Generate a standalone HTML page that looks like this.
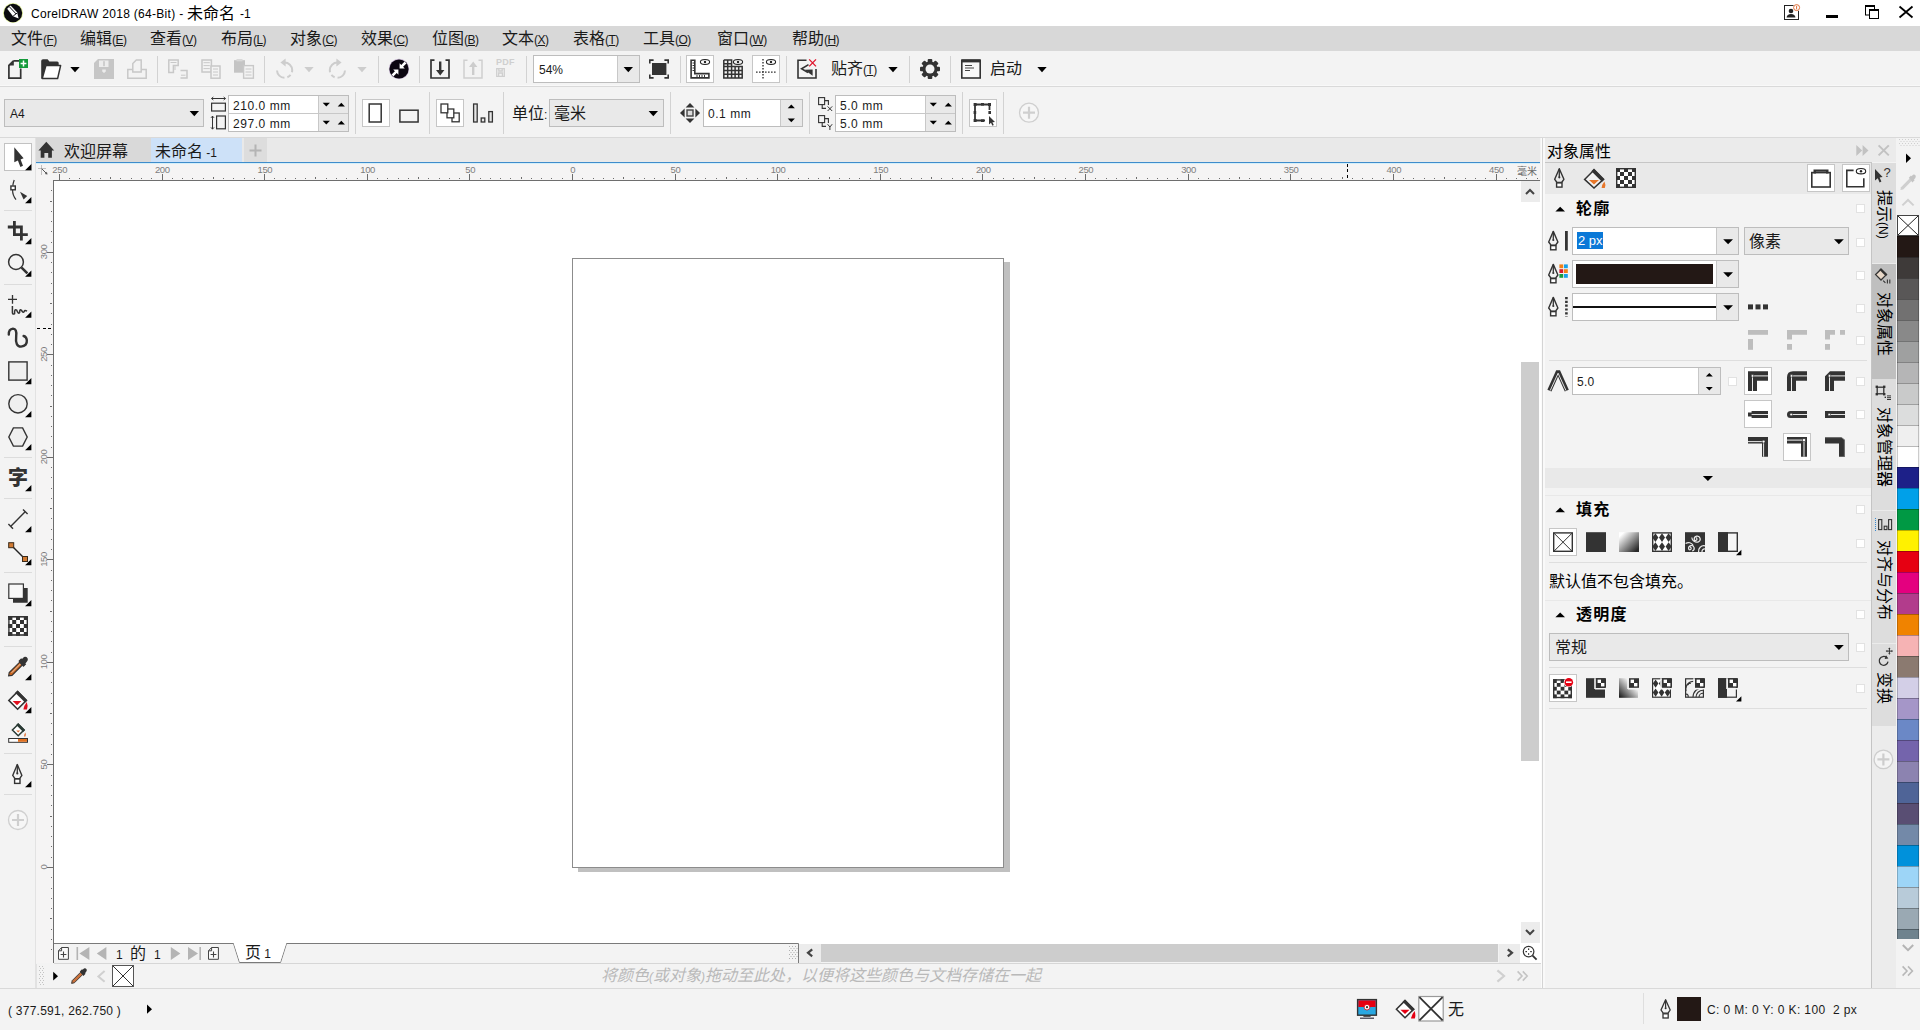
<!DOCTYPE html>
<html lang="zh-CN">
<head>
<meta charset="utf-8">
<title>CorelDRAW 2018 (64-Bit) - 未命名 -1</title>
<style>
*{box-sizing:border-box;margin:0;padding:0}
html,body{width:1920px;height:1030px;overflow:hidden;background:#f3f3f3}
body{position:relative;font-family:"Liberation Sans","Noto Sans CJK SC",sans-serif;font-size:12px;color:#1a1a1a}
.a{position:absolute}
.t{position:absolute;white-space:nowrap;line-height:1}
svg{position:absolute;overflow:visible}
.cj{font-size:16px}
.vs{position:absolute;width:1px;background:#dcdcdc}
.hs{position:absolute;height:1px;background:#dcdcdc}
.btn{position:absolute;background:#fff;border:1px solid #c6c6c6}
.cb{position:absolute;background:#e9e9e9;border:1px solid #bdbdbd}
.ed{position:absolute;background:#fff;border:1px solid #bdbdbd}
.sp{position:absolute;background:#e9e9e9}
.mi{position:absolute;top:26px;height:25px;white-space:nowrap;line-height:25px}
.mi b{font-weight:normal;font-size:16px}
.mi i{font-style:normal;font-size:12px;letter-spacing:-.55px}
.mi u{text-decoration:underline;text-underline-offset:1px}
.sv{font-size:12px;letter-spacing:.55px}
.chk{position:absolute;width:9px;height:9px;background:#fff;border:1px solid #e2e2e2}
</style>
</head>
<body>
<!-- title bar -->
<div class="a" style="left:0;top:0;width:1920px;height:26px;background:#fff"></div>
<svg style="left:2px;top:2px" width="22" height="22" viewBox="0 0 22 22">
 <circle cx="11" cy="11" r="10" fill="#c5e04a" opacity=".55"/>
 <circle cx="11" cy="11" r="9.2" fill="#0b0b10"/>
 <path d="M5.2 6.8 L8.6 3.6 L15.2 10.6 L16.6 16.4 L11 14.2 Z" fill="#fff"/>
 <path d="M7.4 4.8 L14.2 12" stroke="#0b0b10" stroke-width="1" fill="none"/>
 <path d="M11.2 14 L15.4 10.8" stroke="#0b0b10" stroke-width="1" fill="none"/>
</svg>
<div class="t" id="ttl" style="left:31px;top:8px;font-size:12px;color:#000;letter-spacing:.3px">CorelDRAW 2018 (64-Bit) -</div>
<div class="t" id="ttl2" style="left:187px;top:6px;font-size:16px;color:#000">未命名</div>
<div class="t" id="ttl3" style="left:240px;top:8px;font-size:12px;color:#000">-1</div>
<!-- window buttons -->
<svg style="left:1780px;top:0" width="140" height="26" viewBox="1780 0 140 26">
 <rect x="1784.5" y="5.5" width="14" height="14" fill="#fff" stroke="#222" stroke-width="1"/>
 <circle cx="1791" cy="11" r="2.3" fill="#222"/>
 <path d="M1786.5 17.5 q0.5 -3.6 4.5 -3.6 q4 0 4.5 3.6 z" fill="#222"/>
 <circle cx="1796.6" cy="7.6" r="3.6" fill="#fff"/>
 <circle cx="1796.6" cy="7.6" r="3" fill="#fff" stroke="#e0703a" stroke-width="1"/>
 <rect x="1796.1" y="5.8" width="1" height="3.6" fill="#e0703a"/>
 <rect x="1826" y="15" width="12" height="3" fill="#000"/>
 <rect x="1865.5" y="6" width="9" height="9" fill="#fff" stroke="#000" stroke-width="1"/>
 <rect x="1865" y="5" width="10" height="2" fill="#000"/>
 <rect x="1869.5" y="10" width="9" height="8.5" fill="#fff" stroke="#000" stroke-width="1"/>
 <rect x="1869" y="9" width="10" height="2" fill="#000"/>
 <path d="M1899.5 6.5 L1912.5 17.5 M1912.5 6.5 L1899.5 17.5" stroke="#000" stroke-width="1.8" fill="none"/>
</svg>
<!-- menu bar -->
<div class="a" style="left:0;top:26px;width:1920px;height:25px;background:#d8d8d8"></div>
<div class="mi" style="left:11px"><b>文件</b><i>(<u>F</u>)</i></div>
<div class="mi" style="left:80px"><b>编辑</b><i>(<u>E</u>)</i></div>
<div class="mi" style="left:150px"><b>查看</b><i>(<u>V</u>)</i></div>
<div class="mi" style="left:221px"><b>布局</b><i>(<u>L</u>)</i></div>
<div class="mi" style="left:290px"><b>对象</b><i>(<u>C</u>)</i></div>
<div class="mi" style="left:361px"><b>效果</b><i>(<u>C</u>)</i></div>
<div class="mi" style="left:432px"><b>位图</b><i>(<u>B</u>)</i></div>
<div class="mi" style="left:502px"><b>文本</b><i>(<u>X</u>)</i></div>
<div class="mi" style="left:573px"><b>表格</b><i>(<u>T</u>)</i></div>
<div class="mi" style="left:643px"><b>工具</b><i>(<u>O</u>)</i></div>
<div class="mi" style="left:717px"><b>窗口</b><i>(<u>W</u>)</i></div>
<div class="mi" style="left:792px"><b>帮助</b><i>(<u>H</u>)</i></div>
<!-- standard toolbar -->
<div class="hs" style="left:0;top:86px;width:1920px;background:#d9d9d9"></div>
<div class="hs" style="left:0;top:85px;width:1920px;background:#f8f8f8"></div>
<div class="btn" style="left:686px;top:55px;width:28px;height:28px"></div>
<div class="btn" style="left:752px;top:55px;width:28px;height:28px"></div>
<svg style="left:0;top:51px" width="1100" height="36" viewBox="0 51 1100 36">
 <g fill="#d2d2d2">
  <rect x="157" y="56" width="1" height="27"/><rect x="264" y="56" width="1" height="27"/><rect x="378" y="56" width="1" height="27"/>
  <rect x="419" y="56" width="1" height="27"/><rect x="526" y="56" width="1" height="27"/><rect x="680" y="56" width="1" height="27"/>
  <rect x="786" y="56" width="1" height="27"/><rect x="909" y="56" width="1" height="27"/><rect x="950" y="56" width="1" height="27"/>
 </g>
 <!-- new -->
 <path d="M13.5 60.8 H19 M13.5 60.8 L8.9 65.4 V78.1 H20.7 V68.5" fill="none" stroke="#333" stroke-width="1.7"/>
 <path d="M13.8 60.5 V65.6 H8.8 Z" fill="#333"/>
 <rect x="19" y="59" width="9" height="9" fill="#149a3a"/>
 <path d="M23.5 60.6 V66.4 M20.6 63.5 H26.4" stroke="#fff" stroke-width="1.5"/>
 <!-- open -->
 <path d="M41.2 78.6 V61 Q41.2 59.3 43 59.3 H47.6 L49.4 61.4 H57.2 Q58.7 61.4 58.7 63 V65.4 H45.8 L43 78.6 Z" fill="#333"/>
 <path d="M45.9 65.6 H60.6 L57.6 78.6 H42.2 Z" fill="#fff" stroke="#333" stroke-width="1.5" stroke-linejoin="round"/>
 <path d="M70.3 67 H79.7 L75 72.2 Z" fill="#000"/>
 <!-- save disabled -->
 <g fill="#c6c6c6">
  <path d="M94 63 L98 59 H114 V79 H94 Z"/>
 </g>
 <rect x="99" y="60.5" width="9.5" height="6.5" fill="#ececec"/><rect x="103.2" y="61.2" width="1.6" height="5" fill="#c6c6c6"/>
 <path d="M102.2 69.5 H105.8 V71.6 L104 73 L102.2 71.6 Z" fill="#ececec"/>
 <!-- print disabled -->
 <g fill="none" stroke="#c8c8c8" stroke-width="1.5">
  <path d="M132.8 69.5 H127.8 V78.2 H146.2 V69.5 H141.2"/>
  <path d="M132.8 72 V63.5 L136.3 60 H141.2 V72 Z"/>
  <!-- cut -->
  <path d="M168.8 60 H178.2 V65.5 H173.4 V72.4 H168.8 Z"/>
  <path d="M180.5 70.5 H187 V77.9 H180.5"/>
  <path d="M170.5 62.5 H176.5 M175 66.2 V70 M181 75.2 H185.5" stroke-width="1"/>
  <!-- copy -->
  <rect x="202" y="60" width="9.4" height="12" />
  <rect x="211" y="66" width="9" height="12.2" fill="#f3f3f3"/>
  <path d="M203.5 62.7 H209.8 M203.5 65.6 H209.8 M203.5 68.6 H209.8 M213 69 H218 M213 72 H218 M213 75 H218" stroke-width="1"/>
 </g>
 <!-- paste disabled -->
 <rect x="234" y="60.2" width="11" height="12.5" fill="#c4c4c4"/>
 <rect x="236.5" y="59" width="6" height="2.4" fill="#d8d8d8"/>
 <rect x="243.6" y="65.6" width="9.8" height="12.6" fill="#f3f3f3" stroke="#c8c8c8" stroke-width="1.4"/>
 <path d="M245.5 69 H251.5 M245.5 72 H251.5 M245.5 75 H251.5" stroke="#c8c8c8" stroke-width="1"/>
 <!-- undo / redo disabled -->
 <g fill="none" stroke="#cdcdcd" stroke-width="2">
  <path d="M284.5 62.6 A7.6 7.6 0 1 1 277 70.5" stroke-dasharray="14 3 4 3 20"/>
  <path d="M337.5 62.6 A7.6 7.6 0 1 0 345 70.5" stroke-dasharray="14 3 4 3 20"/>
 </g>
 <g fill="#cdcdcd">
  <path d="M285.6 58.6 V66.6 L280.4 62.6 Z"/><path d="M336.4 58.6 V66.6 L341.6 62.6 Z"/>
  <path d="M304.3 67 H313.7 L309 72.2 Z"/><path d="M357.3 67 H366.7 L362 72.2 Z"/>
 </g>
 <!-- black circle -->
 <circle cx="399" cy="69" r="10.2" fill="#6a3a8a" opacity=".35"/>
 <circle cx="399" cy="69" r="9.6" fill="#0b0610"/>
 <g fill="#fff">
  <path d="M399.6 68.4 V63.2 L401.3 64.9 L404.6 61.6 L406.4 63.4 L403.1 66.7 L404.8 68.4 Z"/>
  <path d="M398.4 69.6 V74.8 L396.7 73.1 L393.4 76.4 L391.6 74.6 L394.9 71.3 L393.2 69.6 Z"/>
 </g>
 <!-- import -->
 <path d="M434.5 60.2 H431 V78 H449 V60.2 H445.5" fill="none" stroke="#333" stroke-width="1.7"/>
 <path d="M439 61.4 H441.4 V70 H444.4 L440.2 75.4 L436 70 H439 Z" fill="#333"/>
 <!-- export disabled -->
 <path d="M467.5 60.2 H464 V78 H482 V60.2 H478.5" fill="none" stroke="#cfcfcf" stroke-width="1.5"/>
 <path d="M472 75 H474.4 V67 H477.4 L473.2 61.6 L469 67 H472 Z" fill="#cdcdcd"/>
 <!-- fullscreen -->
 <rect x="652" y="63" width="14.4" height="12" fill="#333"/>
 <path d="M649.8 63.6 V60.1 H653.6 M664.4 60.1 H668.2 V63.6 M668.2 74.4 V77.9 H664.4 M653.6 77.9 H649.8 V74.4" fill="none" stroke="#333" stroke-width="1.6"/>
 <!-- ruler icon -->
 <path d="M691.1 60.2 H694.8 V73.6 H708.9 V77.9 H691.1 Z" fill="#fff" stroke="#333" stroke-width="1.6"/>
 <path d="M692.5 63 H694.5 M692.5 65.5 H694.5 M692.5 68 H694.5 M692.5 70.5 H694.5 M697 75 V77 M699.5 75 V77 M702 75 V77 M704.5 75 V77" stroke="#333" stroke-width="1"/>
 <ellipse cx="705" cy="62" rx="4.6" ry="2.5" fill="#fff" stroke="#222" stroke-width="1.1"/><circle cx="705" cy="62" r="1.2" fill="#222"/>
 <!-- grid icon -->
 <g fill="none" stroke="#333" stroke-width="1.5">
  <path d="M723.8 60 H731.6 V66.4 M723.8 60 V78.1 H742.2 V66.6 H723.8 M723.8 63.8 H731.6 M723.8 70.4 H742.2 M723.8 74.2 H742.2 M727.7 60 V78.1 M731.6 66 V78.1 M735.1 66.6 V78.1 M738.7 66.6 V78.1"/>
 </g>
 <ellipse cx="738" cy="62" rx="4.6" ry="2.5" fill="#f3f3f3" stroke="#222" stroke-width="1.1"/><circle cx="738" cy="62" r="1.2" fill="#222"/>
 <!-- guidelines icon -->
 <path d="M763 59 V79" stroke="#333" stroke-width="1.4" stroke-dasharray="1.6 1.4"/>
 <path d="M756 72.2 H776.4" stroke="#333" stroke-width="1.2" stroke-dasharray="1.6 1.4"/>
 <ellipse cx="771" cy="62" rx="4.6" ry="2.5" fill="#fff" stroke="#222" stroke-width="1.1"/><circle cx="771" cy="62" r="1.2" fill="#222"/>
 <!-- snap off -->
 <path d="M806.5 60.2 H798 V78 H816 V69" fill="none" stroke="#333" stroke-width="1.6"/>
 <path d="M808.5 64.6 L801.6 68.8 L808 72.6" fill="none" stroke="#333" stroke-width="1.6"/>
 <path d="M812.6 69.6 V75.8 L804.5 69.8 Z" fill="#333"/>
 <path d="M809.2 59.4 L816 66.4 M816 59.4 L809.2 66.4" stroke="#e0142c" stroke-width="1.3"/>
 <path d="M888.3 67 H897.7 L893 72.2 Z" fill="#000"/>
 <!-- gear -->
 <g transform="translate(930 69)">
  <g fill="#333"><rect x="-2.3" y="-10" width="4.6" height="20" rx="1"/><rect x="-2.3" y="-10" width="4.6" height="20" rx="1" transform="rotate(45)"/><rect x="-2.3" y="-10" width="4.6" height="20" rx="1" transform="rotate(90)"/><rect x="-2.3" y="-10" width="4.6" height="20" rx="1" transform="rotate(135)"/></g>
  <circle r="7.6" fill="#333"/><circle r="4.5" fill="#f3f3f3"/>
 </g>
 <!-- startup icon -->
 <rect x="961.8" y="60.2" width="18.4" height="17.8" fill="#f8f8f8" stroke="#333" stroke-width="1.6"/>
 <rect x="961.8" y="59.4" width="18.4" height="3" fill="#333"/>
 <path d="M965 65.5 H972 M965 68 H974 M965 70.5 H970" stroke="#444" stroke-width="1.1"/>
 <path d="M1037.3 67 H1046.7 L1042 72.2 Z" fill="#000"/>
</svg>
<div class="t" style="left:496px;top:58px;font-size:9px;font-weight:bold;color:#cfcfcf;letter-spacing:.2px">PDF</div>
<svg style="left:496px;top:68px" width="10" height="10" viewBox="0 0 10 10"><path d="M.7 .7 H8.3 V8.3 H.7 Z M2.6 8 V5 H6.4 V8 M2.8 .8 V3 H6.2 V.8" fill="none" stroke="#cfcfcf" stroke-width="1.3"/></svg>
<div class="ed" style="left:533px;top:55px;width:107px;height:28px"></div>
<div class="sp" style="left:617px;top:56px;width:22px;height:26px;border-left:1px solid #c8c8c8"></div>
<svg style="left:623px;top:67px" width="11" height="6" viewBox="0 0 11 6"><path d="M.6 0 H10 L5.3 5.2 Z" fill="#000"/></svg>
<div class="t" id="z54" style="left:539px;top:64px;font-size:12px">54%</div>
<div class="t" id="tq" style="left:831px;top:61px"><span class="cj">贴齐</span><span style="letter-spacing:-.5px">(<u>T</u>)</span></div>
<div class="t" id="qd" style="left:990px;top:61px"><span class="cj">启动</span></div>
<!-- property bar -->
<div class="hs" style="left:0;top:137px;width:1920px;background:#d9d9d9"></div>
<div class="cb" style="left:4px;top:99px;width:200px;height:28px"></div>
<div class="t" id="a4" style="left:10px;top:108px;font-size:12px">A4</div>
<svg style="left:189px;top:111px" width="11" height="6" viewBox="0 0 11 6"><path d="M.6 0 H10 L5.3 5.2 Z" fill="#000"/></svg>
<!-- page size spin -->
<div class="ed" style="left:228px;top:95px;width:121px;height:37px"></div>
<div class="sp" style="left:318px;top:96px;width:30px;height:35px;border-left:1px solid #c8c8c8"></div>
<div class="hs" style="left:229px;top:113px;width:119px;background:#c8c8c8"></div>
<div class="t sv" style="left:233px;top:100px">210.0 mm</div>
<div class="t sv" style="left:233px;top:118px">297.0 mm</div>
<!-- nudge -->
<div class="ed" style="left:703px;top:99px;width:100px;height:28px"></div>
<div class="sp" style="left:780px;top:100px;width:22px;height:26px;border-left:1px solid #c8c8c8"></div>
<div class="t sv" style="left:708px;top:108px">0.1 mm</div>
<!-- duplicate distance -->
<div class="ed" style="left:835px;top:95px;width:121px;height:37px"></div>
<div class="sp" style="left:925px;top:96px;width:30px;height:35px;border-left:1px solid #c8c8c8"></div>
<div class="hs" style="left:836px;top:113px;width:119px;background:#c8c8c8"></div>
<div class="t sv" style="left:840px;top:100px">5.0 mm</div>
<div class="t sv" style="left:840px;top:118px">5.0 mm</div>
<!-- units -->
<div class="t" id="dw" style="left:512px;top:106px"><span class="cj">单位</span>:</div>
<div class="cb" style="left:549px;top:99px;width:115px;height:28px"></div>
<div class="t cj" id="hm" style="left:554px;top:106px">毫米</div>
<svg style="left:648px;top:111px" width="11" height="6" viewBox="0 0 11 6"><path d="M.6 0 H10 L5.3 5.2 Z" fill="#000"/></svg>
<div class="btn" style="left:362px;top:99px;width:28px;height:28px"></div>
<div class="btn" style="left:436px;top:99px;width:28px;height:28px"></div>
<div class="btn" style="left:969px;top:99px;width:28px;height:28px"></div>
<svg style="left:0;top:87px" width="1100" height="50" viewBox="0 87 1100 50">
 <g fill="#d2d2d2">
  <rect x="355" y="92" width="1" height="42"/><rect x="429" y="92" width="1" height="42"/><rect x="503" y="92" width="1" height="42"/>
  <rect x="670" y="92" width="1" height="42"/><rect x="809" y="92" width="1" height="42"/><rect x="962" y="92" width="1" height="42"/><rect x="1003" y="92" width="1" height="42"/>
 </g>
 <!-- width / height icons -->
 <g fill="none" stroke="#333" stroke-width="1.2">
  <path d="M211.5 98.5 H225.5 M213.3 97 L211.6 98.5 L213.3 100 M223.7 97 L225.4 98.5 L223.7 100" stroke-width="1"/>
  <rect x="211.6" y="103.2" width="13.8" height="7.8"/>
  <path d="M212.5 116 V129.2 M211 117.8 L212.5 116.1 L214 117.8 M211 127.4 L212.5 129.1 L214 127.4" stroke-width="1"/>
  <rect x="216.6" y="116" width="8.8" height="12.8"/>
 </g>
 <!-- spinner arrows -->
 <g fill="#000">
  <path d="M322.7 102.8 H329.9 L326.3 106.4 Z"/><path d="M337.7 106.4 H344.9 L341.3 102.8 Z"/>
  <path d="M322.7 120.8 H329.9 L326.3 124.4 Z"/><path d="M337.7 124.4 H344.9 L341.3 120.8 Z"/>
  <path d="M929.7 102.8 H936.9 L933.3 106.4 Z"/><path d="M944.7 106.4 H951.9 L948.3 102.8 Z"/>
  <path d="M929.7 120.8 H936.9 L933.3 124.4 Z"/><path d="M944.7 124.4 H951.9 L948.3 120.8 Z"/>
  <path d="M787.7 108.2 H794.9 L791.3 104.6 Z"/><path d="M787.7 118.6 H794.9 L791.3 122.2 Z"/>
 </g>
 <!-- portrait / landscape -->
 <rect x="369.2" y="104" width="12" height="18" fill="#fff" stroke="#333" stroke-width="1.5"/>
 <rect x="399.9" y="110.2" width="18.2" height="11.8" fill="none" stroke="#333" stroke-width="1.5"/>
 <!-- all pages -->
 <g fill="#fff" stroke="#333" stroke-width="1.3">
  <rect x="452" y="113" width="7.2" height="8.8"/><rect x="447" y="109" width="6.8" height="8.8"/><rect x="441" y="104" width="6.8" height="8.8"/>
 </g>
 <g fill="#e6e6e6" stroke="#333" stroke-width="1.3">
  <rect x="473.6" y="104" width="3.6" height="18"/><rect x="481.2" y="118" width="3.6" height="4"/><rect x="488.8" y="111.6" width="3.6" height="10.4"/>
 </g>
 <!-- nudge icon -->
 <g fill="#333">
  <path d="M690 103 L694.4 107.6 H685.6 Z"/><path d="M690 123 L694.4 118.4 H685.6 Z"/>
  <path d="M680 113 L684.6 108.6 V117.4 Z"/><path d="M700 113 L695.4 108.6 V117.4 Z"/>
 </g>
 <rect x="687" y="110" width="6" height="6" fill="#ddd" stroke="#444" stroke-width="1.4"/>
 <!-- dup icons -->
 <g fill="none" stroke="#333" stroke-width="1.1">
  <rect x="818.6" y="97.6" width="6" height="7"/><path d="M824.6 100.6 H828.4 V105 M826 108.4 H822.2 V104.6"/>
  <path d="M827.6 106.4 L832.2 111 M832.2 106.4 L827.6 111" stroke-width="1"/>
  <rect x="818.6" y="115.6" width="6" height="7"/><path d="M824.6 118.6 H828.4 V123 M826 126.4 H822.2 V122.6"/>
  <path d="M827.6 124.2 L829.9 127 L832.2 124.2 M829.9 127 V130" stroke-width="1"/>
 </g>
 <!-- treat as filled -->
 <path d="M975 104.5 H989.5 V110 M975 104.5 V120.5 H985" fill="none" stroke="#333" stroke-width="1.8"/>
 <g fill="#333"><rect x="973.6" y="103" width="3" height="3"/><rect x="981" y="103" width="3" height="2.6"/><rect x="988" y="103" width="3" height="3"/><rect x="973.6" y="111" width="2.6" height="3"/><rect x="988.4" y="111" width="2.6" height="3"/><rect x="973.6" y="119" width="3" height="3"/><rect x="981" y="119.4" width="3" height="2.6"/>
  <path d="M989 116 V124.6 L991 122.8 L992.4 125.8 L993.8 125.1 L992.4 122.2 L995 122 Z"/>
 </g>
 <!-- plus circle -->
 <circle cx="1029" cy="112.7" r="9.5" fill="#f6f6f6" stroke="#cfcfcf" stroke-width="1.3"/>
 <path d="M1023 112.7 H1035 M1029 106.7 V118.7" stroke="#cfcfcf" stroke-width="2.2"/>
</svg>
<!-- toolbox -->
<div class="a" style="left:35px;top:138px;width:1px;height:851px;background:#e2e2e2"></div>
<div class="btn" style="left:4px;top:143px;width:28px;height:28px;border-color:#c2c2c2"></div>
<div class="t" style="left:8px;top:467px;font-size:20px;font-weight:900;color:#333;font-family:'Noto Sans CJK SC',sans-serif">字</div>
<svg style="left:0;top:138px" width="36" height="720" viewBox="0 138 36 720">
 <g fill="#dcdcdc">
  <rect x="4" y="210" width="28" height="1"/><rect x="4" y="284" width="28" height="1"/><rect x="4" y="457" width="28" height="1"/><rect x="4" y="498" width="28" height="1"/>
  <rect x="4" y="572" width="28" height="1"/><rect x="4" y="646" width="28" height="1"/><rect x="4" y="753" width="28" height="1"/><rect x="4" y="794" width="28" height="1"/>
 </g>
 <!-- flyout triangles -->
 <g fill="#000">
  <path d="M31.4 164.1 V170.3 H25.1 Z"/><path d="M31.4 197.1 V203.3 H25.1 Z"/><path d="M31.4 238.0 V244.2 H25.1 Z"/><path d="M31.4 270.6 V276.8 H25.1 Z"/>
  <path d="M31.4 311.6 V317.8 H25.1 Z"/><path d="M31.4 378.1 V384.3 H25.1 Z"/><path d="M31.4 411.1 V417.3 H25.1 Z"/><path d="M31.4 444.1 V450.3 H25.1 Z"/>
  <path d="M31.4 485.1 V491.3 H25.1 Z"/><path d="M31.4 526.1 V532.3 H25.1 Z"/><path d="M31.4 559.1 V565.3 H25.1 Z"/><path d="M31.4 600.1 V606.3 H25.1 Z"/>
  <path d="M31.4 674.1 V680.3 H25.1 Z"/><path d="M31.4 707.1 V713.3 H25.1 Z"/><path d="M31.4 781.1 V787.3 H25.1 Z"/>
 </g>
 <!-- pick -->
 <path d="M14.3 147.2 V162.2 L17.9 160.6 L20.4 166.9 L23 165.7 L20.6 159.6 L23.6 158.2 Z" fill="#333"/>
 <!-- shape -->
 <path d="M14.2 180 Q13 183.5 12.8 185.6 M12.6 190 Q12.4 195 16 199.6" fill="none" stroke="#333" stroke-width="1.2"/>
 <rect x="10.9" y="186" width="4.4" height="3.8" fill="#fff" stroke="#333" stroke-width="1.4"/>
 <path d="M20 191.8 L27.2 196 L23.6 199.4 Z" fill="#333"/>
 <!-- crop -->
 <path d="M14.4 221 V234.7 H27.8 M7.8 227 H21.4 V240.6" fill="none" stroke="#333" stroke-width="2.8"/>
 <!-- zoom -->
 <circle cx="16" cy="262" r="7.4" fill="none" stroke="#333" stroke-width="1.5"/>
 <path d="M21.6 267.6 L27.4 273.4" stroke="#333" stroke-width="2.6"/>
 <!-- freehand -->
 <path d="M12.5 295 V303.8 M8 299.4 H17" stroke="#333" stroke-width="1.3" fill="none"/>
 <path d="M12.4 306 V312.6 Q12.6 315 14.6 313.6 Q14.4 308.5 16.6 310 Q18.4 314.5 19.6 312.6 Q19.6 308.6 21.4 310.2 Q23 313.4 24.2 311.6 Q24.4 309.4 27 311.2" fill="none" stroke="#333" stroke-width="1.5"/>
 <!-- artistic media -->
 <path d="M8.8 334.6 Q8.6 329 13 328.6 Q17 328.8 16.2 336 Q15 346.6 21 346.6 Q27.4 346 26.8 340 Q26.4 336.6 23.6 336" fill="none" stroke="#333" stroke-width="2.4" stroke-linecap="round"/>
 <!-- rectangle -->
 <rect x="8.8" y="361.9" width="18.3" height="18.2" fill="#efefef" stroke="#333" stroke-width="1.4"/>
 <!-- ellipse -->
 <circle cx="18" cy="403.8" r="9.2" fill="#efefef" stroke="#333" stroke-width="1.4"/>
 <!-- polygon -->
 <path d="M8.8 437 L13.4 427.9 H22.6 L27.2 437 L22.6 446.1 H13.4 Z" fill="#efefef" stroke="#333" stroke-width="1.4"/>
 <!-- dimension -->
 <path d="M10.6 526.4 L25.4 511.6 M8.4 524 L13 528.8 M23 509.4 L27.6 514" fill="none" stroke="#333" stroke-width="1.4"/>
 <!-- connector -->
 <path d="M11 545 L25 559" stroke="#222" stroke-width="1.4"/>
 <rect x="8.7" y="542.7" width="5" height="5" fill="#d07a32" stroke="#3a2a1a" stroke-width="1"/>
 <rect x="22.5" y="556.5" width="5" height="5" fill="#d07a32" stroke="#3a2a1a" stroke-width="1"/>
 <!-- drop shadow -->
 <path d="M25.8 588 V600.8 H13 " fill="none" stroke="#333" stroke-width="3.8"/>
 <rect x="8.8" y="584" width="14.6" height="14.4" fill="#f8f8f8" stroke="#333" stroke-width="1.2"/>
 <!-- transparency checker -->
 <rect x="8.2" y="616" width="19.8" height="19.8" fill="#fff"/>
 <g fill="#333">
  <rect x="8.2" y="616" width="19.8" height="1.6"/><rect x="8.2" y="634.2" width="19.8" height="1.6"/><rect x="8.2" y="616" width="1.4" height="19.8"/><rect x="26.6" y="616" width="1.4" height="19.8"/>
  <rect x="8.2" y="616" width="4.2" height="4"/><rect x="16" y="616" width="4" height="4"/><rect x="23.8" y="616" width="4.2" height="4"/>
  <rect x="12.2" y="620" width="4" height="4"/><rect x="20" y="620" width="4" height="4"/>
  <rect x="8.2" y="624" width="4.2" height="4"/><rect x="16" y="624" width="4" height="4"/><rect x="23.8" y="624" width="4.2" height="4"/>
  <rect x="12.2" y="628" width="4" height="4"/><rect x="20" y="628" width="4" height="4"/>
  <rect x="8.2" y="632" width="4.2" height="3.8"/><rect x="16" y="632" width="4" height="3.8"/><rect x="23.8" y="632" width="4.2" height="3.8"/>
 </g>
 <!-- eyedropper -->
 <path d="M8.6 675.8 L9.2 672.6 L19.6 662.2 L22.4 665 L12 675.4 Z" fill="#c8641e" stroke="#333" stroke-width="1.1"/>
 <path d="M11.6 672.8 L20.6 663.8" stroke="#fff" stroke-width="1" opacity=".7"/>
 <path d="M18.4 661 L21.2 658.2 L22 659 L24 657 Q26.2 656.2 27.6 658.2 Q28.4 660 27 661.6 L25.4 663.4 L26.2 664.2 L23.4 667 Z" fill="#333"/>
 <!-- interactive fill -->
 <path d="M17.6 691.6 L26.4 700.4 L17.6 709.2 L8.8 700.4 Z" fill="#fff" stroke="#333" stroke-width="1.5"/>
 <path d="M17.6 690.4 L27.4 700.2 L25 702.6 L15.2 692.8 Z" fill="#333"/>
 <path d="M12.6 701 H21.4 L17 705.2 Z" fill="#e0101e"/>
 <path d="M26.8 702 Q28.4 706.4 27 709.6 L23.4 709.6 Q24 705.4 26.8 702 Z" fill="#e0101e"/>
 <!-- smart fill -->
 <path d="M18.2 724.2 L24 730 L18.2 735.8 L12.4 730 Z" fill="#fff" stroke="#2a3a34" stroke-width="1.5"/>
 <path d="M18.2 723 L25.2 730 L23.2 732 L16.2 725 Z" fill="#2a3a34"/>
 <path d="M16.2 730.4 H20.2 L18.2 732.6 Z" fill="#e07030"/>
 <path d="M25.4 732.6 Q26.4 734.6 25.4 736.4 L24 736.4 Q24.2 734.2 25.4 732.6 Z" fill="#e07030"/>
 <rect x="8.7" y="738.5" width="18.8" height="3.8" fill="#fff" stroke="#333" stroke-width="1"/>
 <rect x="18" y="739" width="9" height="2.8" fill="#e07020"/>
 <!-- outline pen -->
 <path d="M17.3 764.6 L21.9 775.4 L19.6 778.6 H15 L12.7 775.4 Z" fill="none" stroke="#333" stroke-width="1.4" stroke-linejoin="round"/>
 <path d="M17.3 764.6 V773" stroke="#333" stroke-width="1.3"/><circle cx="17.3" cy="773.4" r="1.1" fill="#333"/>
 <rect x="14.6" y="779" width="5.4" height="4.4" fill="#fff" stroke="#333" stroke-width="1.4"/>
 <!-- plus -->
 <circle cx="18" cy="820" r="9.5" fill="#f6f6f6" stroke="#cfcfcf" stroke-width="1.3"/>
 <path d="M12 820 H24 M18 814 V826" stroke="#cfcfcf" stroke-width="2.2"/>
</svg>
<!-- document tabs -->
<div class="a" style="left:36px;top:138px;width:1504px;height:24px;background:#e9e9e9"></div>
<div class="a" style="left:36px;top:138px;width:115px;height:24px;background:#d9d9d9"></div>
<div class="a" style="left:151px;top:138px;width:91px;height:24px;background:#cde1f8"></div>
<div class="a" style="left:244px;top:138px;width:23px;height:24px;background:#dddddd"></div>
<div class="a" style="left:36px;top:162px;width:1504px;height:1px;background:#3f8ccb"></div>
<div class="a" style="left:36px;top:163px;width:1504px;height:1px;background:#d4effa"></div>
<svg style="left:38px;top:141px" width="17" height="18" viewBox="0 0 17 18"><path d="M8.3 .8 L16.2 9.4 H13.9 V16.8 H10.2 V12 H6.4 V16.8 H2.7 V9.4 H.4 Z" fill="#333"/></svg>
<div class="t cj" id="tab1" style="left:64px;top:144px">欢迎屏幕</div>
<div class="t" id="tab2" style="left:155px;top:144px"><span class="cj">未命名</span> -1</div>
<svg style="left:249px;top:144px" width="13" height="13" viewBox="0 0 13 13"><path d="M6.5 .5 V12.5 M.5 6.5 H12.5" stroke="#b4b4b4" stroke-width="2" fill="none"/></svg>
<!-- canvas -->
<div class="a" style="left:36px;top:164px;width:1504px;height:17px;background:#f5f4f4"></div>
<div class="a" style="left:36px;top:164px;width:18px;height:799px;background:#f5f4f4"></div>
<div class="a" style="left:54px;top:181px;width:1487px;height:763px;background:#fff"></div>
<div class="a" style="left:53px;top:180px;width:1487px;height:1px;background:#6e6e6e"></div>
<div class="a" style="left:53px;top:180px;width:1px;height:783px;background:#6e6e6e"></div>
<div class="a" style="left:578px;top:262px;width:432px;height:610px;background:#c0c0c0"></div>
<div class="a" style="left:572px;top:258px;width:432px;height:610px;background:#fff;border:1px solid #8c8c8c"></div>
<svg style="left:36px;top:163px" width="1504" height="800" viewBox="36 163 1504 800" shape-rendering="crispEdges">
<g fill="#6c6c6c">
<rect x="59" y="174" width="1" height="6"/>
<rect x="69" y="178" width="1" height="1"/>
<rect x="79" y="178" width="1" height="1"/>
<rect x="90" y="178" width="1" height="1"/>
<rect x="100" y="178" width="1" height="1"/>
<rect x="110" y="177" width="1" height="2"/>
<rect x="120" y="178" width="1" height="1"/>
<rect x="131" y="178" width="1" height="1"/>
<rect x="141" y="178" width="1" height="1"/>
<rect x="151" y="178" width="1" height="1"/>
<rect x="162" y="174" width="1" height="6"/>
<rect x="172" y="178" width="1" height="1"/>
<rect x="182" y="178" width="1" height="1"/>
<rect x="192" y="178" width="1" height="1"/>
<rect x="203" y="178" width="1" height="1"/>
<rect x="213" y="177" width="1" height="2"/>
<rect x="223" y="178" width="1" height="1"/>
<rect x="233" y="178" width="1" height="1"/>
<rect x="244" y="178" width="1" height="1"/>
<rect x="254" y="178" width="1" height="1"/>
<rect x="264" y="174" width="1" height="6"/>
<rect x="274" y="178" width="1" height="1"/>
<rect x="285" y="178" width="1" height="1"/>
<rect x="295" y="178" width="1" height="1"/>
<rect x="305" y="178" width="1" height="1"/>
<rect x="315" y="177" width="1" height="2"/>
<rect x="326" y="178" width="1" height="1"/>
<rect x="336" y="178" width="1" height="1"/>
<rect x="346" y="178" width="1" height="1"/>
<rect x="357" y="178" width="1" height="1"/>
<rect x="367" y="174" width="1" height="6"/>
<rect x="377" y="178" width="1" height="1"/>
<rect x="387" y="178" width="1" height="1"/>
<rect x="398" y="178" width="1" height="1"/>
<rect x="408" y="178" width="1" height="1"/>
<rect x="418" y="177" width="1" height="2"/>
<rect x="428" y="178" width="1" height="1"/>
<rect x="439" y="178" width="1" height="1"/>
<rect x="449" y="178" width="1" height="1"/>
<rect x="459" y="178" width="1" height="1"/>
<rect x="469" y="174" width="1" height="6"/>
<rect x="480" y="178" width="1" height="1"/>
<rect x="490" y="178" width="1" height="1"/>
<rect x="500" y="178" width="1" height="1"/>
<rect x="510" y="178" width="1" height="1"/>
<rect x="521" y="177" width="1" height="2"/>
<rect x="531" y="178" width="1" height="1"/>
<rect x="541" y="178" width="1" height="1"/>
<rect x="551" y="178" width="1" height="1"/>
<rect x="562" y="178" width="1" height="1"/>
<rect x="572" y="174" width="1" height="6"/>
<rect x="582" y="178" width="1" height="1"/>
<rect x="593" y="178" width="1" height="1"/>
<rect x="603" y="178" width="1" height="1"/>
<rect x="613" y="178" width="1" height="1"/>
<rect x="623" y="177" width="1" height="2"/>
<rect x="634" y="178" width="1" height="1"/>
<rect x="644" y="178" width="1" height="1"/>
<rect x="654" y="178" width="1" height="1"/>
<rect x="664" y="178" width="1" height="1"/>
<rect x="675" y="174" width="1" height="6"/>
<rect x="685" y="178" width="1" height="1"/>
<rect x="695" y="178" width="1" height="1"/>
<rect x="705" y="178" width="1" height="1"/>
<rect x="716" y="178" width="1" height="1"/>
<rect x="726" y="177" width="1" height="2"/>
<rect x="736" y="178" width="1" height="1"/>
<rect x="746" y="178" width="1" height="1"/>
<rect x="757" y="178" width="1" height="1"/>
<rect x="767" y="178" width="1" height="1"/>
<rect x="777" y="174" width="1" height="6"/>
<rect x="788" y="178" width="1" height="1"/>
<rect x="798" y="178" width="1" height="1"/>
<rect x="808" y="178" width="1" height="1"/>
<rect x="818" y="178" width="1" height="1"/>
<rect x="829" y="177" width="1" height="2"/>
<rect x="839" y="178" width="1" height="1"/>
<rect x="849" y="178" width="1" height="1"/>
<rect x="859" y="178" width="1" height="1"/>
<rect x="870" y="178" width="1" height="1"/>
<rect x="880" y="174" width="1" height="6"/>
<rect x="890" y="178" width="1" height="1"/>
<rect x="900" y="178" width="1" height="1"/>
<rect x="911" y="178" width="1" height="1"/>
<rect x="921" y="178" width="1" height="1"/>
<rect x="931" y="177" width="1" height="2"/>
<rect x="941" y="178" width="1" height="1"/>
<rect x="952" y="178" width="1" height="1"/>
<rect x="962" y="178" width="1" height="1"/>
<rect x="972" y="178" width="1" height="1"/>
<rect x="982" y="174" width="1" height="6"/>
<rect x="993" y="178" width="1" height="1"/>
<rect x="1003" y="178" width="1" height="1"/>
<rect x="1013" y="178" width="1" height="1"/>
<rect x="1024" y="178" width="1" height="1"/>
<rect x="1034" y="177" width="1" height="2"/>
<rect x="1044" y="178" width="1" height="1"/>
<rect x="1054" y="178" width="1" height="1"/>
<rect x="1065" y="178" width="1" height="1"/>
<rect x="1075" y="178" width="1" height="1"/>
<rect x="1085" y="174" width="1" height="6"/>
<rect x="1095" y="178" width="1" height="1"/>
<rect x="1106" y="178" width="1" height="1"/>
<rect x="1116" y="178" width="1" height="1"/>
<rect x="1126" y="178" width="1" height="1"/>
<rect x="1136" y="177" width="1" height="2"/>
<rect x="1147" y="178" width="1" height="1"/>
<rect x="1157" y="178" width="1" height="1"/>
<rect x="1167" y="178" width="1" height="1"/>
<rect x="1177" y="178" width="1" height="1"/>
<rect x="1188" y="174" width="1" height="6"/>
<rect x="1198" y="178" width="1" height="1"/>
<rect x="1208" y="178" width="1" height="1"/>
<rect x="1219" y="178" width="1" height="1"/>
<rect x="1229" y="178" width="1" height="1"/>
<rect x="1239" y="177" width="1" height="2"/>
<rect x="1249" y="178" width="1" height="1"/>
<rect x="1260" y="178" width="1" height="1"/>
<rect x="1270" y="178" width="1" height="1"/>
<rect x="1280" y="178" width="1" height="1"/>
<rect x="1290" y="174" width="1" height="6"/>
<rect x="1301" y="178" width="1" height="1"/>
<rect x="1311" y="178" width="1" height="1"/>
<rect x="1321" y="178" width="1" height="1"/>
<rect x="1331" y="178" width="1" height="1"/>
<rect x="1342" y="177" width="1" height="2"/>
<rect x="1352" y="178" width="1" height="1"/>
<rect x="1362" y="178" width="1" height="1"/>
<rect x="1372" y="178" width="1" height="1"/>
<rect x="1383" y="178" width="1" height="1"/>
<rect x="1393" y="174" width="1" height="6"/>
<rect x="1403" y="178" width="1" height="1"/>
<rect x="1413" y="178" width="1" height="1"/>
<rect x="1424" y="178" width="1" height="1"/>
<rect x="1434" y="178" width="1" height="1"/>
<rect x="1444" y="177" width="1" height="2"/>
<rect x="1455" y="178" width="1" height="1"/>
<rect x="1465" y="178" width="1" height="1"/>
<rect x="1475" y="178" width="1" height="1"/>
<rect x="1485" y="178" width="1" height="1"/>
<rect x="1496" y="174" width="1" height="6"/>
<rect x="1506" y="178" width="1" height="1"/>
<rect x="1516" y="178" width="1" height="1"/>
<rect x="1526" y="178" width="1" height="1"/>
<rect x="1537" y="178" width="1" height="1"/>
<rect x="51" y="949" width="1" height="1"/>
<rect x="51" y="939" width="1" height="1"/>
<rect x="51" y="929" width="1" height="1"/>
<rect x="50" y="918" width="2" height="1"/>
<rect x="51" y="908" width="1" height="1"/>
<rect x="51" y="898" width="1" height="1"/>
<rect x="51" y="888" width="1" height="1"/>
<rect x="51" y="877" width="1" height="1"/>
<rect x="47" y="867" width="6" height="1"/>
<rect x="51" y="857" width="1" height="1"/>
<rect x="51" y="846" width="1" height="1"/>
<rect x="51" y="836" width="1" height="1"/>
<rect x="51" y="826" width="1" height="1"/>
<rect x="50" y="816" width="2" height="1"/>
<rect x="51" y="805" width="1" height="1"/>
<rect x="51" y="795" width="1" height="1"/>
<rect x="51" y="785" width="1" height="1"/>
<rect x="51" y="775" width="1" height="1"/>
<rect x="47" y="764" width="6" height="1"/>
<rect x="51" y="754" width="1" height="1"/>
<rect x="51" y="744" width="1" height="1"/>
<rect x="51" y="734" width="1" height="1"/>
<rect x="51" y="723" width="1" height="1"/>
<rect x="50" y="713" width="2" height="1"/>
<rect x="51" y="703" width="1" height="1"/>
<rect x="51" y="693" width="1" height="1"/>
<rect x="51" y="682" width="1" height="1"/>
<rect x="51" y="672" width="1" height="1"/>
<rect x="47" y="662" width="6" height="1"/>
<rect x="51" y="652" width="1" height="1"/>
<rect x="51" y="641" width="1" height="1"/>
<rect x="51" y="631" width="1" height="1"/>
<rect x="51" y="621" width="1" height="1"/>
<rect x="50" y="611" width="2" height="1"/>
<rect x="51" y="600" width="1" height="1"/>
<rect x="51" y="590" width="1" height="1"/>
<rect x="51" y="580" width="1" height="1"/>
<rect x="51" y="570" width="1" height="1"/>
<rect x="47" y="559" width="6" height="1"/>
<rect x="51" y="549" width="1" height="1"/>
<rect x="51" y="539" width="1" height="1"/>
<rect x="51" y="529" width="1" height="1"/>
<rect x="51" y="518" width="1" height="1"/>
<rect x="50" y="508" width="2" height="1"/>
<rect x="51" y="498" width="1" height="1"/>
<rect x="51" y="488" width="1" height="1"/>
<rect x="51" y="477" width="1" height="1"/>
<rect x="51" y="467" width="1" height="1"/>
<rect x="47" y="457" width="6" height="1"/>
<rect x="51" y="447" width="1" height="1"/>
<rect x="51" y="436" width="1" height="1"/>
<rect x="51" y="426" width="1" height="1"/>
<rect x="51" y="416" width="1" height="1"/>
<rect x="50" y="406" width="2" height="1"/>
<rect x="51" y="395" width="1" height="1"/>
<rect x="51" y="385" width="1" height="1"/>
<rect x="51" y="375" width="1" height="1"/>
<rect x="51" y="365" width="1" height="1"/>
<rect x="47" y="354" width="6" height="1"/>
<rect x="51" y="344" width="1" height="1"/>
<rect x="51" y="334" width="1" height="1"/>
<rect x="51" y="324" width="1" height="1"/>
<rect x="51" y="313" width="1" height="1"/>
<rect x="50" y="303" width="2" height="1"/>
<rect x="51" y="293" width="1" height="1"/>
<rect x="51" y="283" width="1" height="1"/>
<rect x="51" y="272" width="1" height="1"/>
<rect x="51" y="262" width="1" height="1"/>
<rect x="47" y="252" width="6" height="1"/>
<rect x="51" y="242" width="1" height="1"/>
<rect x="51" y="231" width="1" height="1"/>
<rect x="51" y="221" width="1" height="1"/>
<rect x="51" y="211" width="1" height="1"/>
<rect x="50" y="201" width="2" height="1"/>
<rect x="51" y="190" width="1" height="1"/>
</g>
<path d="M1347.5 164 V180" stroke="#000" stroke-width="1" stroke-dasharray="3 2.4"/>
<path d="M37 328.5 H53" stroke="#000" stroke-width="1" stroke-dasharray="3 2.6"/>
<g shape-rendering="auto"><path d="M38.5 168.5 H46 M41.5 165.5 V175" stroke="#8a8a8a" stroke-width="1" stroke-dasharray="1 1"/><path d="M41.8 168.8 L47 174" stroke="#555" stroke-width="1"/><path d="M47.6 174.6 L44.8 173.9 L46.9 171.8 Z" fill="#555"/></g>
<g shape-rendering="auto" font-family="Liberation Sans, sans-serif" font-size="9.5" fill="#7d7d7d" text-anchor="middle" letter-spacing="-.4">
<text x="59.7" y="172.6">250</text>
<text x="162.3" y="172.6">200</text>
<text x="264.9" y="172.6">150</text>
<text x="367.6" y="172.6">100</text>
<text x="470.2" y="172.6">50</text>
<text x="572.8" y="172.6">0</text>
<text x="675.4" y="172.6">50</text>
<text x="778.0" y="172.6">100</text>
<text x="880.7" y="172.6">150</text>
<text x="983.3" y="172.6">200</text>
<text x="1085.9" y="172.6">250</text>
<text x="1188.5" y="172.6">300</text>
<text x="1291.1" y="172.6">350</text>
<text x="1393.8" y="172.6">400</text>
<text x="1496.4" y="172.6">450</text>
<text transform="translate(47 867.1) rotate(-90)" >0</text>
<text transform="translate(47 764.6) rotate(-90)" >50</text>
<text transform="translate(47 662.0) rotate(-90)" >100</text>
<text transform="translate(47 559.5) rotate(-90)" >150</text>
<text transform="translate(47 457.0) rotate(-90)" >200</text>
<text transform="translate(47 354.5) rotate(-90)" >250</text>
<text transform="translate(47 251.9) rotate(-90)" >300</text>
</g>
<text shape-rendering="auto" x="1517" y="174.5" font-family="Noto Sans CJK SC, sans-serif" font-size="10" fill="#6a6a6a">毫米</text>
</svg>
<div class="a" style="left:1521px;top:181px;width:19px;height:21px;background:#ececec"></div>
<div class="a" style="left:1521px;top:922px;width:19px;height:21px;background:#ececec"></div>
<div class="a" style="left:1521px;top:362px;width:18px;height:399px;background:#cdcdcd"></div>
<svg style="left:1525px;top:188px" width="10" height="7" viewBox="0 0 10 7"><path d="M1 6 L5 2 L9 6" fill="none" stroke="#444" stroke-width="2"/></svg>
<svg style="left:1525px;top:929px" width="10" height="7" viewBox="0 0 10 7"><path d="M1 1 L5 5 L9 1" fill="none" stroke="#444" stroke-width="2"/></svg>
<div class="a" style="left:54px;top:944px;width:1467px;height:19px;background:#f3f3f3"></div>
<div class="a" style="left:1520px;top:944px;width:21px;height:19px;background:#fff"></div>
<div class="a" style="left:54px;top:963px;width:1487px;height:1px;background:#d6d6d6"></div>
<div class="a" style="left:799px;top:944px;width:22px;height:19px;background:#ececec"></div>
<div class="a" style="left:1499px;top:944px;width:21px;height:19px;background:#ececec"></div>
<div class="a" style="left:821px;top:944px;width:677px;height:18px;background:#cdcdcd"></div>
<svg style="left:54px;top:940px" width="1490" height="26" viewBox="54 940 1490 26">
<path d="M54 943.5 H233.5 L239.5 962.5 H280.5 L286.5 943.5 H798.5 V963" fill="none" stroke="#7a7a7a" stroke-width="1"/>
<path d="M234 944 L239.8 962 H280.2 L286 944 Z" fill="#fff"/>
<g fill="#b0b0b0">
<rect x="789" y="946" width="1" height="1"/>
<rect x="792" y="946" width="1" height="1"/>
<rect x="795" y="946" width="1" height="1"/>
<rect x="790.5" y="948" width="1" height="1"/>
<rect x="793.5" y="948" width="1" height="1"/>
<rect x="796.5" y="948" width="1" height="1"/>
<rect x="789" y="950" width="1" height="1"/>
<rect x="792" y="950" width="1" height="1"/>
<rect x="795" y="950" width="1" height="1"/>
<rect x="790.5" y="952" width="1" height="1"/>
<rect x="793.5" y="952" width="1" height="1"/>
<rect x="796.5" y="952" width="1" height="1"/>
<rect x="789" y="954" width="1" height="1"/>
<rect x="792" y="954" width="1" height="1"/>
<rect x="795" y="954" width="1" height="1"/>
<rect x="790.5" y="956" width="1" height="1"/>
<rect x="793.5" y="956" width="1" height="1"/>
<rect x="796.5" y="956" width="1" height="1"/>
<rect x="789" y="958" width="1" height="1"/>
<rect x="792" y="958" width="1" height="1"/>
<rect x="795" y="958" width="1" height="1"/>
</g>
<path d="M61.6 947.5 H68.4 V959.3 H58.5 V950.8 Z M61.6 947.5 V950.8 H58.5" fill="#fbfbfb" stroke="#444" stroke-width="1"/>
<path d="M63.5 951.6 V957.4 M60.6 954.5 H66.4" stroke="#444" stroke-width="1.1"/>
<path d="M211.6 947.5 H218.4 V959.3 H208.5 V950.8 Z M211.6 947.5 V950.8 H208.5" fill="#fbfbfb" stroke="#444" stroke-width="1"/>
<path d="M213.5 951.6 V957.4 M210.6 954.5 H216.4" stroke="#444" stroke-width="1.1"/>
<g fill="#b4b4b4">
<rect x="76.5" y="947" width="1.6" height="13"/><path d="M89.4 947 V960 L79.4 953.5 Z"/>
<path d="M106.4 947 V960 L96.8 953.5 Z"/>
<path d="M170.8 947 V960 L180.4 953.5 Z"/>
<path d="M188 947 V960 L198 953.5 Z"/><rect x="199.4" y="947" width="1.6" height="13"/>
</g>
<path d="M812.2 949.3 L808 952.8 L812.2 956.3" fill="none" stroke="#444" stroke-width="2.2"/>
<path d="M1507.8 949.3 L1512 952.8 L1507.8 956.3" fill="none" stroke="#444" stroke-width="2.2"/>
<circle cx="1528.6" cy="951.6" r="5.3" fill="#fff" stroke="#333" stroke-width="1.2"/><path d="M1532.6 955.6 L1536.6 959.6" stroke="#333" stroke-width="1.8"/>
<g fill="#333"><rect x="1528" y="948.4" width="1.2" height="1.6"/><rect x="1528" y="953.2" width="1.2" height="1.6"/><rect x="1525.4" y="951" width="1.6" height="1.2"/><rect x="1530.2" y="951" width="1.6" height="1.2"/></g>
</svg>
<div class="t" id="nav1" style="left:116px;top:949px;font-size:12px">1</div>
<div class="t cj" id="navde" style="left:130px;top:946px">的</div>
<div class="t" id="nav2" style="left:154px;top:949px;font-size:12px">1</div>
<div class="t" id="pg1" style="left:245px;top:945px"><span class="cj">页</span> 1</div>
<div class="a" style="left:36px;top:964px;width:1px;height:24px;background:#e2e2e2"></div>
<div class="a" style="left:0;top:988px;width:1920px;height:1px;background:#d9d9d9"></div>
<svg style="left:36px;top:964px" width="1510" height="24" viewBox="36 964 1510 24">
<g fill="#c4c4c4">
<rect x="39" y="966" width="1" height="1"/>
<rect x="42" y="966" width="1" height="1"/>
<rect x="40" y="968" width="1" height="1"/>
<rect x="43" y="968" width="1" height="1"/>
<rect x="39" y="970" width="1" height="1"/>
<rect x="42" y="970" width="1" height="1"/>
<rect x="40" y="972" width="1" height="1"/>
<rect x="43" y="972" width="1" height="1"/>
<rect x="39" y="974" width="1" height="1"/>
<rect x="42" y="974" width="1" height="1"/>
<rect x="40" y="976" width="1" height="1"/>
<rect x="43" y="976" width="1" height="1"/>
<rect x="39" y="978" width="1" height="1"/>
<rect x="42" y="978" width="1" height="1"/>
<rect x="40" y="980" width="1" height="1"/>
<rect x="43" y="980" width="1" height="1"/>
<rect x="39" y="982" width="1" height="1"/>
<rect x="42" y="982" width="1" height="1"/>
<rect x="40" y="984" width="1" height="1"/>
<rect x="43" y="984" width="1" height="1"/>
</g>
<path d="M53.2 971.8 V980.6 L58 976.2 Z" fill="#000"/>
<path d="M71.6 983.4 L72.2 980.6 L80.6 972.2 L82.8 974.4 L74.4 982.8 Z" fill="#c8703a" stroke="#333" stroke-width=".9"/>
<path d="M79.8 971.4 L82 969.2 L82.6 969.8 L84 968.4 Q85.6 967.8 86.6 969.2 Q87.2 970.6 86.2 971.8 L85 973.2 L85.6 973.8 L83.4 976 Z" fill="#333"/>
<path d="M104.6 971 L98.4 976.4 L104.6 981.8" fill="none" stroke="#d0d0d0" stroke-width="2"/>
<rect x="112.5" y="965.5" width="21" height="21" fill="#fff" stroke="#555" stroke-width="1"/><path d="M113 966 L133 986 M133 966 L113 986" stroke="#333" stroke-width="1"/>
<path d="M1497.4 970.4 L1504 976 L1497.4 981.6" fill="none" stroke="#d0d0d0" stroke-width="2.2"/>
<path d="M1517.6 971.4 L1522 976 L1517.6 980.6 M1522.8 971.4 L1527.2 976 L1522.8 980.6" fill="none" stroke="#c4c4c4" stroke-width="1.6"/>
</svg>
<div class="t" id="hint" style="left:601px;top:968px;font-size:16px;font-style:italic;color:#b9b9b9;font-family:'Liberation Sans','Noto Sans CJK SC',sans-serif">将颜色<span style="font-size:12px">(</span>或对象<span style="font-size:12px">)</span>拖动至此处，以便将这些颜色与文档存储在一起</div>
<div class="a" style="left:1541px;top:138px;width:1px;height:850px;background:#fbfbfb"></div>
<div class="a" style="left:1542px;top:138px;width:1px;height:850px;background:#d4d4d4"></div>
<div class="a" style="left:1543px;top:138px;width:2px;height:850px;background:#f9f9f9"></div>
<!-- docker: object properties -->
<div class="a" style="left:1545px;top:138px;width:351px;height:24px;background:#ebebeb"></div>
<div class="a" style="left:1545px;top:162px;width:327px;height:1px;background:#c6c6c6"></div>
<div class="a" style="left:1545px;top:163px;width:326px;height:31px;background:#e9e9e9"></div>
<div class="t cj" id="dk" style="left:1547px;top:144px;color:#000">对象属性</div>
<div class="btn" style="left:1807px;top:164px;width:28px;height:28px"></div>
<div class="btn" style="left:1842px;top:164px;width:28px;height:28px"></div>
<div class="a" style="left:1545px;top:468px;width:326px;height:20px;background:#e9e9e9"></div>
<div class="hs" style="left:1549px;top:360px;width:318px;background:#dedede"></div>
<div class="hs" style="left:1545px;top:495px;width:326px;background:#e8e8e8"></div>
<div class="hs" style="left:1549px;top:562px;width:318px;background:#dedede"></div>
<div class="hs" style="left:1545px;top:600px;width:326px;background:#e8e8e8"></div>
<div class="hs" style="left:1549px;top:667px;width:318px;background:#dedede"></div>
<div class="hs" style="left:1549px;top:708px;width:318px;background:#dedede"></div>
<div class="t cj" id="s1" style="left:1576px;top:201px;font-weight:bold;color:#000;letter-spacing:1.2px">轮廓</div>
<div class="t cj" id="s2" style="left:1576px;top:502px;font-weight:bold;color:#000;letter-spacing:1.2px">填充</div>
<div class="t cj" id="s3" style="left:1576px;top:607px;font-weight:bold;color:#000;letter-spacing:1.2px">透明度</div>
<div class="chk" style="left:1856px;top:204px"></div>
<div class="chk" style="left:1856px;top:238px"></div>
<div class="chk" style="left:1856px;top:271px"></div>
<div class="chk" style="left:1856px;top:304px"></div>
<div class="chk" style="left:1856px;top:336px"></div>
<div class="chk" style="left:1856px;top:377px"></div>
<div class="chk" style="left:1856px;top:410px"></div>
<div class="chk" style="left:1856px;top:444px"></div>
<div class="chk" style="left:1856px;top:505px"></div>
<div class="chk" style="left:1856px;top:539px"></div>
<div class="chk" style="left:1856px;top:610px"></div>
<div class="chk" style="left:1856px;top:643px"></div>
<div class="chk" style="left:1856px;top:684px"></div>
<div class="chk" style="left:1728px;top:377px"></div>
<div class="ed" style="left:1572px;top:227px;width:167px;height:28px"></div>
<div class="sp" style="left:1716px;top:228px;width:22px;height:26px;border-left:1px solid #c8c8c8"></div>
<div class="a" style="left:1577px;top:232px;width:26px;height:17px;background:#0a78d7"></div>
<div class="t" id="w2px" style="left:1578px;top:234px;font-size:13px;color:#fff">2 px</div>
<div class="cb" style="left:1744px;top:227px;width:105px;height:28px"></div>
<div class="t cj" id="xs" style="left:1749px;top:234px">像素</div>
<div class="ed" style="left:1572px;top:260px;width:167px;height:28px"></div>
<div class="sp" style="left:1716px;top:261px;width:22px;height:26px;border-left:1px solid #c8c8c8"></div>
<div class="a" style="left:1576px;top:264px;width:137px;height:20px;background:#231815"></div>
<div class="ed" style="left:1572px;top:293px;width:167px;height:28px"></div>
<div class="sp" style="left:1716px;top:294px;width:22px;height:26px;border-left:1px solid #c8c8c8"></div>
<div class="a" style="left:1573px;top:306px;width:143px;height:2px;background:#111"></div>
<div class="ed" style="left:1572px;top:367px;width:149px;height:28px"></div>
<div class="sp" style="left:1698px;top:368px;width:22px;height:26px;border-left:1px solid #c8c8c8"></div>
<div class="t" id="m50" style="left:1577px;top:376px;font-size:12px;letter-spacing:.3px">5.0</div>
<div class="btn" style="left:1744px;top:367px;width:28px;height:28px"></div>
<div class="btn" style="left:1744px;top:400px;width:28px;height:28px"></div>
<div class="btn" style="left:1783px;top:433px;width:28px;height:28px"></div>
<div class="btn" style="left:1549px;top:528px;width:28px;height:28px"></div>
<div class="btn" style="left:1549px;top:674px;width:28px;height:28px"></div>
<div class="t cj" id="ft" style="left:1549px;top:574px;color:#000">默认值不包含填充。</div>
<div class="cb" style="left:1549px;top:633px;width:300px;height:28px"></div>
<div class="t cj" id="cg" style="left:1555px;top:640px">常规</div>
<svg style="left:1545px;top:138px" width="330" height="600" viewBox="1545 138 330 600">
<path d="M1856.3 145 L1862.2 150.5 L1856.3 156 Z M1862.6 145 L1868.5 150.5 L1862.6 156 Z" fill="#c2c2c2"/>
<path d="M1878.6 145.4 L1888.8 155.4 M1888.8 145.4 L1878.6 155.4" stroke="#c2c2c2" stroke-width="2"/>
<path d="M1559.3 168.7 L1563.9 179.3 L1561.6 182.5 H1557.0 L1554.7 179.3 Z" fill="none" stroke="#333" stroke-width="1.4" stroke-linejoin="round"/><path d="M1559.3 168.7 V176.9" stroke="#333" stroke-width="1.3"/><circle cx="1559.3" cy="177.3" r="1.1" fill="#333"/><rect x="1556.6" y="182.9" width="5.4" height="4.2" fill="#fff" stroke="#333" stroke-width="1.4"/>
<path d="M1594 170 L1603.4 179.4 L1594 188 L1584.6 179.4 Z" fill="#f3f3f3" stroke="#333" stroke-width="1.5"/>
<path d="M1594 168.6 L1604.6 179.2 L1602 181.8 L1591.4 171.2 Z" fill="#333"/>
<path d="M1589 180 H1599 L1594 184.6 Z" fill="#e8772a"/>
<path d="M1604.4 181.6 Q1606.2 185 1604.8 188 L1601.6 188 Q1602 184.4 1604.4 181.6 Z" fill="#e8772a"/>
<rect x="1616" y="168" width="20" height="20" fill="#fff"/><rect x="1616.0" y="168.0" width="4" height="4" fill="#333"/><rect x="1624.0" y="168.0" width="4" height="4" fill="#333"/><rect x="1632.0" y="168.0" width="4" height="4" fill="#333"/><rect x="1620.0" y="172.0" width="4" height="4" fill="#333"/><rect x="1628.0" y="172.0" width="4" height="4" fill="#333"/><rect x="1616.0" y="176.0" width="4" height="4" fill="#333"/><rect x="1624.0" y="176.0" width="4" height="4" fill="#333"/><rect x="1632.0" y="176.0" width="4" height="4" fill="#333"/><rect x="1620.0" y="180.0" width="4" height="4" fill="#333"/><rect x="1628.0" y="180.0" width="4" height="4" fill="#333"/><rect x="1616.0" y="184.0" width="4" height="4" fill="#333"/><rect x="1624.0" y="184.0" width="4" height="4" fill="#333"/><rect x="1632.0" y="184.0" width="4" height="4" fill="#333"/><rect x="1616.7" y="168.7" width="18.6" height="18.6" fill="none" stroke="#333" stroke-width="1.4"/>
<rect x="1811.8" y="172.6" width="18.4" height="14.4" fill="#fff" stroke="#333" stroke-width="1.6"/><path d="M1813.5 169.4 H1828.5 V173.4 H1826 V171.8 H1816 V173.4 H1813.5 Z" fill="#333"/>
<path d="M1853.6 170.4 H1846.8 V186.8 H1863.8 V178.2" fill="none" stroke="#333" stroke-width="1.6"/>
<ellipse cx="1861" cy="171.2" rx="4.7" ry="2.7" fill="#fff" stroke="#222" stroke-width="1.1"/><circle cx="1861" cy="171.2" r="1.2" fill="#222"/>
<path d="M1555.4 211.4 H1565 L1560.2 206.8 Z" fill="#000"/>
<path d="M1555.4 512.2 H1565 L1560.2 507.6 Z" fill="#000"/>
<path d="M1555.4 617.2 H1565 L1560.2 612.6 Z" fill="#000"/>
<path d="M1553.3 231.4 L1557.9 242.0 L1555.6 245.2 H1551.0 L1548.7 242.0 Z" fill="none" stroke="#333" stroke-width="1.4" stroke-linejoin="round"/><path d="M1553.3 231.4 V239.6" stroke="#333" stroke-width="1.3"/><circle cx="1553.3" cy="240.0" r="1.1" fill="#333"/><rect x="1550.6" y="245.6" width="5.4" height="4.2" fill="#fff" stroke="#333" stroke-width="1.4"/>
<rect x="1565" y="231" width="2.8" height="19.6" fill="#333"/>
<path d="M1553.3 264.4 L1557.9 275.0 L1555.6 278.2 H1551.0 L1548.7 275.0 Z" fill="none" stroke="#333" stroke-width="1.4" stroke-linejoin="round"/><path d="M1553.3 264.4 V272.6" stroke="#333" stroke-width="1.3"/><circle cx="1553.3" cy="273.0" r="1.1" fill="#333"/><rect x="1550.6" y="278.6" width="5.4" height="4.2" fill="#fff" stroke="#333" stroke-width="1.4"/>
<rect x="1559.4" y="264.4" width="3.8" height="3.8" fill="#f08018"/>
<rect x="1564" y="264.4" width="3.8" height="3.8" fill="#18a0e8"/>
<rect x="1559.4" y="269.2" width="3.8" height="3.8" fill="#d81830"/>
<rect x="1564" y="269.2" width="3.8" height="3.8" fill="#f08018"/>
<rect x="1559.4" y="274" width="3.8" height="3.8" fill="#189a40"/>
<rect x="1564" y="274" width="3.8" height="3.8" fill="#18a0e8"/>
<path d="M1553.3 297.4 L1557.9 308.0 L1555.6 311.2 H1551.0 L1548.7 308.0 Z" fill="none" stroke="#333" stroke-width="1.4" stroke-linejoin="round"/><path d="M1553.3 297.4 V305.6" stroke="#333" stroke-width="1.3"/><circle cx="1553.3" cy="306.0" r="1.1" fill="#333"/><rect x="1550.6" y="311.6" width="5.4" height="4.2" fill="#fff" stroke="#333" stroke-width="1.4"/>
<path d="M1566.4 297 V316.6" stroke="#333" stroke-width="2.6" stroke-dasharray="2.2 1.6"/>
<path d="M1723.2 239.2 H1733.0 L1728.1000000000001 244.2 Z" fill="#000"/>
<path d="M1723.2 272.2 H1733.0 L1728.1000000000001 277.2 Z" fill="#000"/>
<path d="M1723.2 305.2 H1733.0 L1728.1000000000001 310.2 Z" fill="#000"/>
<path d="M1834 239.2 H1843.8 L1838.9 244.2 Z" fill="#000"/>
<path d="M1834 645 H1843.8 L1838.9 650 Z" fill="#000"/>
<rect x="1748" y="304.4" width="5" height="5" fill="#333"/>
<rect x="1755.5" y="304.4" width="5" height="5" fill="#333"/>
<rect x="1763" y="304.4" width="5" height="5" fill="#333"/>
<g fill="#bdbdbd">
<rect x="1748" y="330" width="20" height="4.8"/><rect x="1748" y="339" width="5" height="10.8"/>
<path d="M1787 330 H1807 V334.8 H1792 V339.6 H1787 Z"/><rect x="1787" y="344" width="5" height="5.8"/>
<path d="M1825 330 H1835 V334.8 H1830 V339.6 H1825 Z"/><rect x="1840" y="330" width="5" height="4.8"/><rect x="1825" y="344" width="5" height="5.8"/>
</g>
<path d="M1549.4 390.6 L1557.6 372.4 H1558.6 L1566.8 390.6" fill="none" stroke="#333" stroke-width="4.4" stroke-linejoin="miter"/>
<path d="M1550.2 390.6 L1558.1 373.2 L1566 390.6" fill="none" stroke="#f3f3f3" stroke-width=".9"/>
<path d="M1705.8 376.4 H1712.8 L1709.3 372.9 Z M1705.8 387 H1712.8 L1709.3 390.5 Z" fill="#000"/>
<path d="M1748 371.3 H1768 V380.7 H1757 V391.0 H1748 Z" fill="#333"/><path d="M1752.5 391.0 V375.90000000000003 H1768" fill="none" stroke="#ececec" stroke-width="1"/><circle cx="1752.5" cy="375.90000000000003" r="1.3" fill="#fff" stroke="#333" stroke-width=".6"/>
<path d="M1787 391.0 V377.3 Q1787 371.3 1793 371.3 H1807 V380.7 H1796 V391.0 Z" fill="#333"/><path d="M1791.5 391.0 V375.90000000000003 H1807" fill="none" stroke="#ececec" stroke-width="1"/><circle cx="1791.5" cy="375.90000000000003" r="1.3" fill="#fff" stroke="#333" stroke-width=".6"/>
<path d="M1825 391.0 V376.3 L1830 371.3 H1845 V380.7 H1834 V391.0 Z" fill="#333"/><path d="M1829.5 391.0 V375.90000000000003 H1845" fill="none" stroke="#ececec" stroke-width="1"/><circle cx="1829.5" cy="375.90000000000003" r="1.3" fill="#fff" stroke="#333" stroke-width=".6"/>
<path d="M1751.6 411 H1768 V418 H1751.6 V416.6 H1748 V412.4 H1751.6 Z" fill="#333"/><path d="M1751.6 414.5 H1768" stroke="#e4e4e4" stroke-width="1"/>
<path d="M1790.5 411 H1807 V418 H1790.5 A3.5 3.5 0 0 1 1790.5 411 Z" fill="#333"/><path d="M1791.5 414.5 H1807" stroke="#e4e4e4" stroke-width="1"/><circle cx="1791.2" cy="414.5" r="1.3" fill="#fff" stroke="#333" stroke-width=".6"/>
<rect x="1825" y="411" width="20" height="7" fill="#333"/><path d="M1829.5 414.5 H1845" stroke="#e4e4e4" stroke-width="1"/><rect x="1828" y="413.3" width="2.4" height="2.4" fill="#fff" stroke="#333" stroke-width=".6"/>
<path d="M1748 437 H1768 V456.7 H1762 V443.4 H1748 Z" fill="#333"/><path d="M1748 441.6 H1763.6 V456.7" fill="none" stroke="#e8e8e8" stroke-width="1"/><circle cx="1763.6" cy="441.6" r="1.4" fill="#fff" stroke="#333" stroke-width=".6"/>
<path d="M1787 437 H1807 V456.7 H1801 V443.4 H1787 Z" fill="#333"/><path d="M1787 440.2 H1804 V456.7" fill="none" stroke="#cfcfcf" stroke-width="1.2"/><rect x="1802.6" y="438.8" width="2.8" height="2.8" fill="#fff" stroke="#333" stroke-width=".6"/>
<path d="M1825 437 H1841 L1845 440 V456.7 H1839 V443.6 H1825 Z" fill="#333"/><path d="M1825 437.6 H1842 L1844.4 440 V456.7" fill="none" stroke="#888" stroke-width=".8"/>
<path d="M1702.8 476 H1713 L1707.9 481 Z" fill="#000"/>
<rect x="1553.7" y="532.9000000000001" width="18.6" height="18.4" fill="#fff" stroke="#333" stroke-width="1.4"/><path d="M1554 533.2 L1572 551.2 M1572 533.2 L1554 551.2" stroke="#333" stroke-width="1"/>
<rect x="1586" y="532.2" width="20" height="19.8" fill="#333"/>
<defs><linearGradient id="g1" x1="0" y1="0" x2="1" y2="1"><stop offset="0.12" stop-color="#fff"/><stop offset="0.9" stop-color="#2a2a2a"/></linearGradient><linearGradient id="g2" x1="1" y1="0" x2="0" y2="1"><stop offset="0.3" stop-color="#f3f3f3"/><stop offset="0.95" stop-color="#222"/></linearGradient></defs>
<rect x="1619" y="532.2" width="20" height="19.8" fill="url(#g1)"/>
<rect x="1652.7" y="532.9000000000001" width="18.6" height="18.4" fill="#fff" stroke="#333" stroke-width="1.4"/><path d="M1655.4 533.2 L1658.4 537.6 L1655.4 542.0 L1652.4 537.6 Z" fill="#333"/><path d="M1662.0 533.2 L1665.0 537.6 L1662.0 542.0 L1659.0 537.6 Z" fill="#333"/><path d="M1668.6 533.2 L1671.6 537.6 L1668.6 542.0 L1665.6 537.6 Z" fill="#333"/><path d="M1655.4 542.2 L1658.4 546.6 L1655.4 551.0 L1652.4 546.6 Z" fill="#333"/><path d="M1662.0 542.2 L1665.0 546.6 L1662.0 551.0 L1659.0 546.6 Z" fill="#333"/><path d="M1668.6 542.2 L1671.6 546.6 L1668.6 551.0 L1665.6 546.6 Z" fill="#333"/>
<rect x="1685" y="532.2" width="20" height="19.8" fill="#333"/>
<g fill="none" stroke="#ececec" stroke-width="1.2"><path d="M1695.8 537.7 a1.4 1.4 0 1 1 -1.6 1.6 a3 3 0 1 1 4.2 2.6 a5 5 0 0 1 -6.6 -4.4"/><path d="M1690 547.2 a1.3 1.3 0 1 1 -1.4 1.4 a2.8 2.8 0 1 1 3.6 2.4 M1685.6 543.6 a5 5 0 0 1 7.6 2"/><path d="M1705 545.8000000000001 a5.4 5.4 0 0 0 -6.4 6.2 M1705 549.0 a2.6 2.6 0 0 0 -3 3"/></g>
<rect x="1718.7" y="532.9000000000001" width="18.6" height="18.4" fill="#f6f6f6" stroke="#333" stroke-width="1.4"/><rect x="1718" y="532.2" width="10" height="19.8" fill="#333"/>
<path d="M1741.4 549.8000000000001 V555.2 H1736 Z" fill="#000"/>
<rect x="1553" y="679.2" width="19.0" height="19.0" fill="#fff"/><rect x="1553.0" y="679.2" width="3.8" height="3.8" fill="#333"/><rect x="1560.6" y="679.2" width="3.8" height="3.8" fill="#333"/><rect x="1568.2" y="679.2" width="3.8" height="3.8" fill="#333"/><rect x="1556.8" y="683.0" width="3.8" height="3.8" fill="#333"/><rect x="1564.4" y="683.0" width="3.8" height="3.8" fill="#333"/><rect x="1553.0" y="686.8" width="3.8" height="3.8" fill="#333"/><rect x="1560.6" y="686.8" width="3.8" height="3.8" fill="#333"/><rect x="1568.2" y="686.8" width="3.8" height="3.8" fill="#333"/><rect x="1556.8" y="690.6" width="3.8" height="3.8" fill="#333"/><rect x="1564.4" y="690.6" width="3.8" height="3.8" fill="#333"/><rect x="1553.0" y="694.4" width="3.8" height="3.8" fill="#333"/><rect x="1560.6" y="694.4" width="3.8" height="3.8" fill="#333"/><rect x="1568.2" y="694.4" width="3.8" height="3.8" fill="#333"/><rect x="1553.7" y="679.9000000000001" width="17.6" height="17.6" fill="none" stroke="#333" stroke-width="1.4"/>
<circle cx="1568.8" cy="682.2" r="5" fill="#fff"/><circle cx="1568.8" cy="682.2" r="4.3" fill="#e60012"/><rect x="1566" y="681.4000000000001" width="5.6" height="1.6" fill="#fff"/>
<rect x="1586" y="678.2" width="19" height="19.6" fill="#333"/><rect x="1596" y="678.2" width="10" height="9.6" fill="#333"/><rect x="1597.6" y="679.6" width="3.4" height="3.4" fill="#fff"/><rect x="1601" y="683.0" width="3.4" height="3.4" fill="#fff"/><path d="M1595 689.0 V678.2 M1595 688.8000000000001 H1606" stroke="#f3f3f3" stroke-width="1.6" fill="none"/>
<rect x="1619" y="678.2" width="19" height="19.6" fill="url(#g2)"/><rect x="1629" y="678.2" width="10" height="9.6" fill="#333"/><rect x="1630.6" y="679.6" width="3.4" height="3.4" fill="#fff"/><rect x="1634" y="683.0" width="3.4" height="3.4" fill="#fff"/><path d="M1628 689.0 V678.2 M1628 688.8000000000001 H1639" stroke="#f3f3f3" stroke-width="1.6" fill="none"/>
<rect x="1652.6" y="678.8000000000001" width="17.8" height="18.4" fill="#fff" stroke="#333" stroke-width="1.2"/><path d="M1655.6 679.4 L1658.4 683.6 L1655.6 687.8 L1652.8 683.6 Z" fill="#333"/><path d="M1661.6 679.4 L1664.4 683.6 L1661.6 687.8 L1658.8 683.6 Z" fill="#333"/><path d="M1667.6 679.4 L1670.4 683.6 L1667.6 687.8 L1664.8 683.6 Z" fill="#333"/><path d="M1655.6 688.4 L1658.4 692.6 L1655.6 696.8 L1652.8 692.6 Z" fill="#333"/><path d="M1661.6 688.4 L1664.4 692.6 L1661.6 696.8 L1658.8 692.6 Z" fill="#333"/><path d="M1667.6 688.4 L1670.4 692.6 L1667.6 696.8 L1664.8 692.6 Z" fill="#333"/><rect x="1662" y="678.2" width="10" height="9.6" fill="#333"/><rect x="1663.6" y="679.6" width="3.4" height="3.4" fill="#fff"/><rect x="1667" y="683.0" width="3.4" height="3.4" fill="#fff"/><path d="M1661 689.0 V678.2 M1661 688.8000000000001 H1672" stroke="#f3f3f3" stroke-width="1.6" fill="none"/>
<rect x="1685.6" y="678.8000000000001" width="17.8" height="18.4" fill="#f0f0f0" stroke="#333" stroke-width="1.2"/><g fill="none" stroke="#333" stroke-width="1.1"><path d="M1686 688.2 a5 5 0 0 1 5 -5 M1686 691.2 a8 8 0 0 1 8 -10 M1686 685.2 a3 3 0 0 0 3 -3 M1703 690.2 a7 7 0 0 0 -7 7 M1703 693.2 a4 4 0 0 0 -4 4 M1703 687.6 a9.6 9.6 0 0 0 -10 9.6 M1686 694.2 a2 2 0 0 1 2 3"/></g><rect x="1695" y="678.2" width="10" height="9.6" fill="#333"/><rect x="1696.6" y="679.6" width="3.4" height="3.4" fill="#fff"/><rect x="1700" y="683.0" width="3.4" height="3.4" fill="#fff"/><path d="M1694 689.0 V678.2 M1694 688.8000000000001 H1705" stroke="#f3f3f3" stroke-width="1.6" fill="none"/>
<rect x="1718.6" y="678.8000000000001" width="17.8" height="18.4" fill="#f3f3f3" stroke="#333" stroke-width="1.2"/><rect x="1718" y="678.2" width="9" height="19.6" fill="#333"/><rect x="1728" y="678.2" width="10" height="9.6" fill="#333"/><rect x="1729.6" y="679.6" width="3.4" height="3.4" fill="#fff"/><rect x="1733" y="683.0" width="3.4" height="3.4" fill="#fff"/><path d="M1727 689.0 V678.2 M1727 688.8000000000001 H1738" stroke="#f3f3f3" stroke-width="1.6" fill="none"/>
<path d="M1741.4 696.2 V701.6 H1736 Z" fill="#000"/>
</svg>
<!-- docker tab strip -->
<div class="a" style="left:1872px;top:163px;width:24px;height:825px;background:#ececec"></div>
<div class="a" style="left:1872px;top:163px;width:24px;height:563px;background:#dddddd"></div>
<div class="a" style="left:1872px;top:264px;width:24px;height:115px;background:#bfbfbf"></div>
<div class="a" style="left:1872px;top:263px;width:24px;height:1px;background:#ebebeb"></div>
<div class="a" style="left:1872px;top:510px;width:24px;height:1px;background:#ebebeb"></div>
<div class="a" style="left:1872px;top:643px;width:24px;height:1px;background:#ebebeb"></div>
<div class="a" style="left:1871px;top:163px;width:1px;height:825px;background:#c4c4c4"></div>
<div class="t cj" id="vt1" style="left:1892px;top:190px;transform-origin:0 0;transform:rotate(90deg);color:#000">提示<span style="font-size:12px;letter-spacing:0">(N)</span></div>
<div class="t cj" id="vt2" style="left:1892px;top:292px;transform-origin:0 0;transform:rotate(90deg);color:#000">对象属性</div>
<div class="t cj" id="vt3" style="left:1892px;top:407px;transform-origin:0 0;transform:rotate(90deg);color:#000">对象管理器</div>
<div class="t cj" id="vt4" style="left:1892px;top:540px;transform-origin:0 0;transform:rotate(90deg);color:#000">对齐与分布</div>
<div class="t cj" id="vt5" style="left:1892px;top:672px;transform-origin:0 0;transform:rotate(90deg);color:#000">变换</div>
<svg style="left:1872px;top:163px" width="24" height="620" viewBox="1872 163 24 620">
<path d="M1875 169 V180.4 L1877.8 178.2 L1879.6 182.4 L1881.4 181.6 L1879.6 177.6 L1882.6 177 Z" fill="#333"/>
<text x="1883.6" y="176.6" font-family="Liberation Sans, sans-serif" font-size="13" fill="#333">?</text>
<path d="M1881 269.2 L1886.4 274.6 L1881 280 L1875.6 274.6 Z" fill="#e8d8c8" stroke="#333" stroke-width="1.3"/><path d="M1881 268.2 L1887.4 274.6 L1885.8 276.2 L1879.4 269.8 Z" fill="#333"/>
<path d="M1887.4 279.4 V283.4 M1889.8 279.4 V283.4 M1883.2 280.6 L1885.4 282.8" stroke="#333" stroke-width="1.1"/>
<rect x="1877.2" y="387.2" width="6.6" height="6.6" fill="none" stroke="#333" stroke-width="1.3"/><g fill="#333"><rect x="1875.6" y="385.6" width="2.4" height="2.4"/><rect x="1883" y="385.6" width="2.4" height="2.4"/><rect x="1875.6" y="393" width="2.4" height="2.4"/><rect x="1883" y="393" width="2.4" height="2.4"/><rect x="1884.6" y="396.6" width="1.4" height="1.4"/><rect x="1887" y="395.4" width="4" height="1"/><rect x="1887" y="397.2" width="4" height="1"/><rect x="1887" y="399" width="4" height="1"/></g>
<path d="M1875.5 518 V531" stroke="#3a8ad0" stroke-width="1" stroke-dasharray="1 1"/><rect x="1878.6" y="519.6" width="3.2" height="10" fill="none" stroke="#333" stroke-width="1.1"/><rect x="1884.2" y="526.2" width="2.8" height="3.4" fill="none" stroke="#333" stroke-width="1.1"/><rect x="1888.6" y="519.6" width="3" height="10" fill="none" stroke="#333" stroke-width="1.1"/>
<path d="M1886.6 657.6 A4.4 4.4 0 1 0 1888 661.6" fill="none" stroke="#333" stroke-width="1.3"/><path d="M1886 655.2 L1888.4 658.6 L1884.6 659 Z" fill="#333"/>
<path d="M1889.4 648.4 V653.8 M1886.7 651.1 H1892.1" stroke="#333" stroke-width="1"/><path d="M1889.4 647.4 L1890.6 649 H1888.2 Z M1889.4 654.8 L1890.6 653.2 H1888.2 Z M1885.7 651.1 L1887.3 649.9 V652.3 Z M1893.1 651.1 L1891.5 649.9 V652.3 Z" fill="#333"/>
<circle cx="1883.4" cy="759.4" r="9.3" fill="#f4f4f4" stroke="#cdcdcd" stroke-width="1.3"/><path d="M1877.4 759.4 H1889.4 M1883.4 753.4 V765.4" stroke="#cdcdcd" stroke-width="2.2"/>
</svg>
<!-- color palette -->
<svg style="left:1896px;top:138px" width="24" height="850" viewBox="1896 138 24 850">
<g fill="#cfcfcf">
<rect x="1899" y="139" width="1" height="1"/>
<rect x="1902" y="139" width="1" height="1"/>
<rect x="1905" y="139" width="1" height="1"/>
<rect x="1908" y="139" width="1" height="1"/>
<rect x="1911" y="139" width="1" height="1"/>
<rect x="1914" y="139" width="1" height="1"/>
<rect x="1917" y="139" width="1" height="1"/>
<rect x="1900.5" y="141" width="1" height="1"/>
<rect x="1903.5" y="141" width="1" height="1"/>
<rect x="1906.5" y="141" width="1" height="1"/>
<rect x="1909.5" y="141" width="1" height="1"/>
<rect x="1912.5" y="141" width="1" height="1"/>
<rect x="1915.5" y="141" width="1" height="1"/>
<rect x="1918.5" y="141" width="1" height="1"/>
<rect x="1899" y="143" width="1" height="1"/>
<rect x="1902" y="143" width="1" height="1"/>
<rect x="1905" y="143" width="1" height="1"/>
<rect x="1908" y="143" width="1" height="1"/>
<rect x="1911" y="143" width="1" height="1"/>
<rect x="1914" y="143" width="1" height="1"/>
<rect x="1917" y="143" width="1" height="1"/>
<rect x="1900.5" y="145" width="1" height="1"/>
<rect x="1903.5" y="145" width="1" height="1"/>
<rect x="1906.5" y="145" width="1" height="1"/>
<rect x="1909.5" y="145" width="1" height="1"/>
<rect x="1912.5" y="145" width="1" height="1"/>
<rect x="1915.5" y="145" width="1" height="1"/>
<rect x="1918.5" y="145" width="1" height="1"/>
</g>
<path d="M1906 153.6 V163 L1911 158.3 Z" fill="#000"/>
<path d="M1900.4 190 L1901 187.2 L1909.6 178.6 L1911.8 180.8 L1903.2 189.4 Z" fill="#cfcfcf"/><path d="M1908.8 177.8 L1911 175.6 L1911.6 176.2 L1913 174.8 Q1914.6 174.2 1915.6 175.6 Q1916.2 177 1915.2 178.2 L1914 179.6 L1914.6 180.2 L1912.4 182.4 Z" fill="#c4c4c4"/>
<path d="M1902.4 205.4 L1908 200 L1913.6 205.4" fill="none" stroke="#d0d0d0" stroke-width="2"/>
<rect x="1897.5" y="215.5" width="21" height="20" fill="#fff" stroke="#444" stroke-width="1"/><path d="M1898 216 L1918 235 M1918 216 L1898 235" stroke="#222" stroke-width="1"/>
<rect x="1897" y="236" width="22" height="21" fill="#231815"/>
<rect x="1897" y="236" width="22" height="1" fill="#000" opacity=".28"/>
<rect x="1897" y="257" width="22" height="21" fill="#3e3a39"/>
<rect x="1897" y="257" width="22" height="1" fill="#000" opacity=".28"/>
<rect x="1897" y="278" width="22" height="21" fill="#595757"/>
<rect x="1897" y="278" width="22" height="1" fill="#000" opacity=".28"/>
<rect x="1897" y="299" width="22" height="21" fill="#727171"/>
<rect x="1897" y="299" width="22" height="1" fill="#000" opacity=".28"/>
<rect x="1897" y="320" width="22" height="21" fill="#898989"/>
<rect x="1897" y="320" width="22" height="1" fill="#000" opacity=".28"/>
<rect x="1897" y="341" width="22" height="21" fill="#9fa0a0"/>
<rect x="1897" y="341" width="22" height="1" fill="#000" opacity=".28"/>
<rect x="1897" y="362" width="22" height="21" fill="#b5b5b6"/>
<rect x="1897" y="362" width="22" height="1" fill="#000" opacity=".28"/>
<rect x="1897" y="383" width="22" height="21" fill="#c9caca"/>
<rect x="1897" y="383" width="22" height="1" fill="#000" opacity=".28"/>
<rect x="1897" y="404" width="22" height="21" fill="#dcdddd"/>
<rect x="1897" y="404" width="22" height="1" fill="#000" opacity=".28"/>
<rect x="1897" y="425" width="22" height="21" fill="#efefef"/>
<rect x="1897" y="425" width="22" height="1" fill="#000" opacity=".28"/>
<rect x="1897" y="446" width="22" height="21" fill="#ffffff"/>
<rect x="1897" y="446" width="22" height="1" fill="#000" opacity=".28"/>
<rect x="1897" y="467" width="22" height="21" fill="#1d2088"/>
<rect x="1897" y="467" width="22" height="1" fill="#000" opacity=".28"/>
<rect x="1897" y="488" width="22" height="21" fill="#00a0e9"/>
<rect x="1897" y="488" width="22" height="1" fill="#000" opacity=".28"/>
<rect x="1897" y="509" width="22" height="21" fill="#009944"/>
<rect x="1897" y="509" width="22" height="1" fill="#000" opacity=".28"/>
<rect x="1897" y="530" width="22" height="21" fill="#fff100"/>
<rect x="1897" y="530" width="22" height="1" fill="#000" opacity=".28"/>
<rect x="1897" y="551" width="22" height="21" fill="#e60012"/>
<rect x="1897" y="551" width="22" height="1" fill="#000" opacity=".28"/>
<rect x="1897" y="572" width="22" height="21" fill="#e4007f"/>
<rect x="1897" y="572" width="22" height="1" fill="#000" opacity=".28"/>
<rect x="1897" y="593" width="22" height="21" fill="#b23c8c"/>
<rect x="1897" y="593" width="22" height="1" fill="#000" opacity=".28"/>
<rect x="1897" y="614" width="22" height="21" fill="#f08300"/>
<rect x="1897" y="614" width="22" height="1" fill="#000" opacity=".28"/>
<rect x="1897" y="635" width="22" height="21" fill="#f6b3b4"/>
<rect x="1897" y="635" width="22" height="1" fill="#000" opacity=".28"/>
<rect x="1897" y="656" width="22" height="21" fill="#8b7a70"/>
<rect x="1897" y="656" width="22" height="1" fill="#000" opacity=".28"/>
<rect x="1897" y="677" width="22" height="21" fill="#d3cfe7"/>
<rect x="1897" y="677" width="22" height="1" fill="#000" opacity=".28"/>
<rect x="1897" y="698" width="22" height="21" fill="#a596c8"/>
<rect x="1897" y="698" width="22" height="1" fill="#000" opacity=".28"/>
<rect x="1897" y="719" width="22" height="21" fill="#6b88c6"/>
<rect x="1897" y="719" width="22" height="1" fill="#000" opacity=".28"/>
<rect x="1897" y="740" width="22" height="21" fill="#7464ac"/>
<rect x="1897" y="740" width="22" height="1" fill="#000" opacity=".28"/>
<rect x="1897" y="761" width="22" height="21" fill="#8c83b0"/>
<rect x="1897" y="761" width="22" height="1" fill="#000" opacity=".28"/>
<rect x="1897" y="782" width="22" height="21" fill="#4f6497"/>
<rect x="1897" y="782" width="22" height="1" fill="#000" opacity=".28"/>
<rect x="1897" y="803" width="22" height="21" fill="#594e73"/>
<rect x="1897" y="803" width="22" height="1" fill="#000" opacity=".28"/>
<rect x="1897" y="824" width="22" height="21" fill="#7389a8"/>
<rect x="1897" y="824" width="22" height="1" fill="#000" opacity=".28"/>
<rect x="1897" y="845" width="22" height="21" fill="#0091db"/>
<rect x="1897" y="845" width="22" height="1" fill="#000" opacity=".28"/>
<rect x="1897" y="866" width="22" height="21" fill="#9dd5f7"/>
<rect x="1897" y="866" width="22" height="1" fill="#000" opacity=".28"/>
<rect x="1897" y="887" width="22" height="21" fill="#b8cbd9"/>
<rect x="1897" y="887" width="22" height="1" fill="#000" opacity=".28"/>
<rect x="1897" y="908" width="22" height="21" fill="#9aa9b3"/>
<rect x="1897" y="908" width="22" height="1" fill="#000" opacity=".28"/>
<rect x="1897" y="929" width="22" height="10" fill="#6f838e"/>
<rect x="1897" y="929" width="22" height="1" fill="#000" opacity=".28"/>
<rect x="1897" y="236" width="1" height="703" fill="#000" opacity=".2"/><rect x="1918" y="236" width="1" height="703" fill="#000" opacity=".2"/>
<path d="M1902.8 945 L1908 950.2 L1913.2 945" fill="none" stroke="#b4b4b4" stroke-width="2"/>
<path d="M1902.6 966.4 L1907 971 L1902.6 975.6 M1908 966.4 L1912.4 971 L1908 975.6" fill="none" stroke="#b8b8b8" stroke-width="1.6"/>
</svg>
<!-- status bar -->
<div class="t" id="coord" style="left:8px;top:1005px;font-size:12px;letter-spacing:.25px">( 377.591, 262.750 )</div>
<svg style="left:0;top:989px" width="1920" height="41" viewBox="0 989 1920 41">
<path d="M147 1004.6 V1013.8 L152 1009.2 Z" fill="#000"/>
<rect x="1643" y="993" width="1" height="31" fill="#dedede"/>
<rect x="1357.6" y="999.6" width="18.8" height="15.6" fill="#29a7e1" stroke="#333" stroke-width="1.4"/><rect x="1358.4" y="1000.4" width="17.2" height="6.6" fill="#e60012"/>
<circle cx="1367" cy="1007.2" r="2.8" fill="#fff" stroke="#e60012" stroke-width=".8"/><circle cx="1367" cy="1007.2" r="1.1" fill="#333"/>
<rect x="1363.4" y="1015.4" width="7.2" height="1.4" fill="#333"/><rect x="1360" y="1017.6" width="14" height="1.2" fill="#334"/>
<path d="M1405 1000.6 L1413.6 1009.2 L1405 1017.8 L1396.4 1009.2 Z" fill="#fff" stroke="#333" stroke-width="1.5"/><path d="M1405 999.4 L1414.8 1009.2 L1412.4 1011.6 L1402.6 1001.8 Z" fill="#333"/>
<path d="M1400.4 1009.8 H1409.6 L1405 1014 Z" fill="#e60012"/><path d="M1414.6 1011 Q1416 1015 1414.8 1018.4 L1411 1018.4 Q1411.8 1014.2 1414.6 1011 Z" fill="#e60012"/>
<rect x="1418.8" y="996.5" width="24.4" height="24.5" fill="#fff" stroke="#999" stroke-width="1.2"/><path d="M1419.4 997.2 L1442.6 1020.4 M1442.6 997.2 L1419.4 1020.4" stroke="#333" stroke-width="1.8"/>
<path d="M1665.6 999.8 L1670.1999999999998 1010.0 L1668.0 1013.1999999999999 H1663.1999999999998 L1661.0 1010.0 Z" fill="none" stroke="#333" stroke-width="1.3" stroke-linejoin="round"/><path d="M1665.6 999.8 V1007.8" stroke="#333" stroke-width="1.2"/><circle cx="1665.6" cy="1008.1999999999999" r="1" fill="#333"/><rect x="1663.0" y="1013.8" width="5.2" height="4.2" fill="#fff" stroke="#333" stroke-width="1.3"/>
<rect x="1677" y="997" width="24" height="24" fill="#231815"/>
</svg>
<div class="t cj" id="wu" style="left:1448px;top:1002px">无</div>
<div class="t" id="cmyk" style="left:1707px;top:1004px;font-size:12px;white-space:pre;letter-spacing:.38px">C: 0 M: 0 Y: 0 K: 100  2 px</div>
</body>
</html>
